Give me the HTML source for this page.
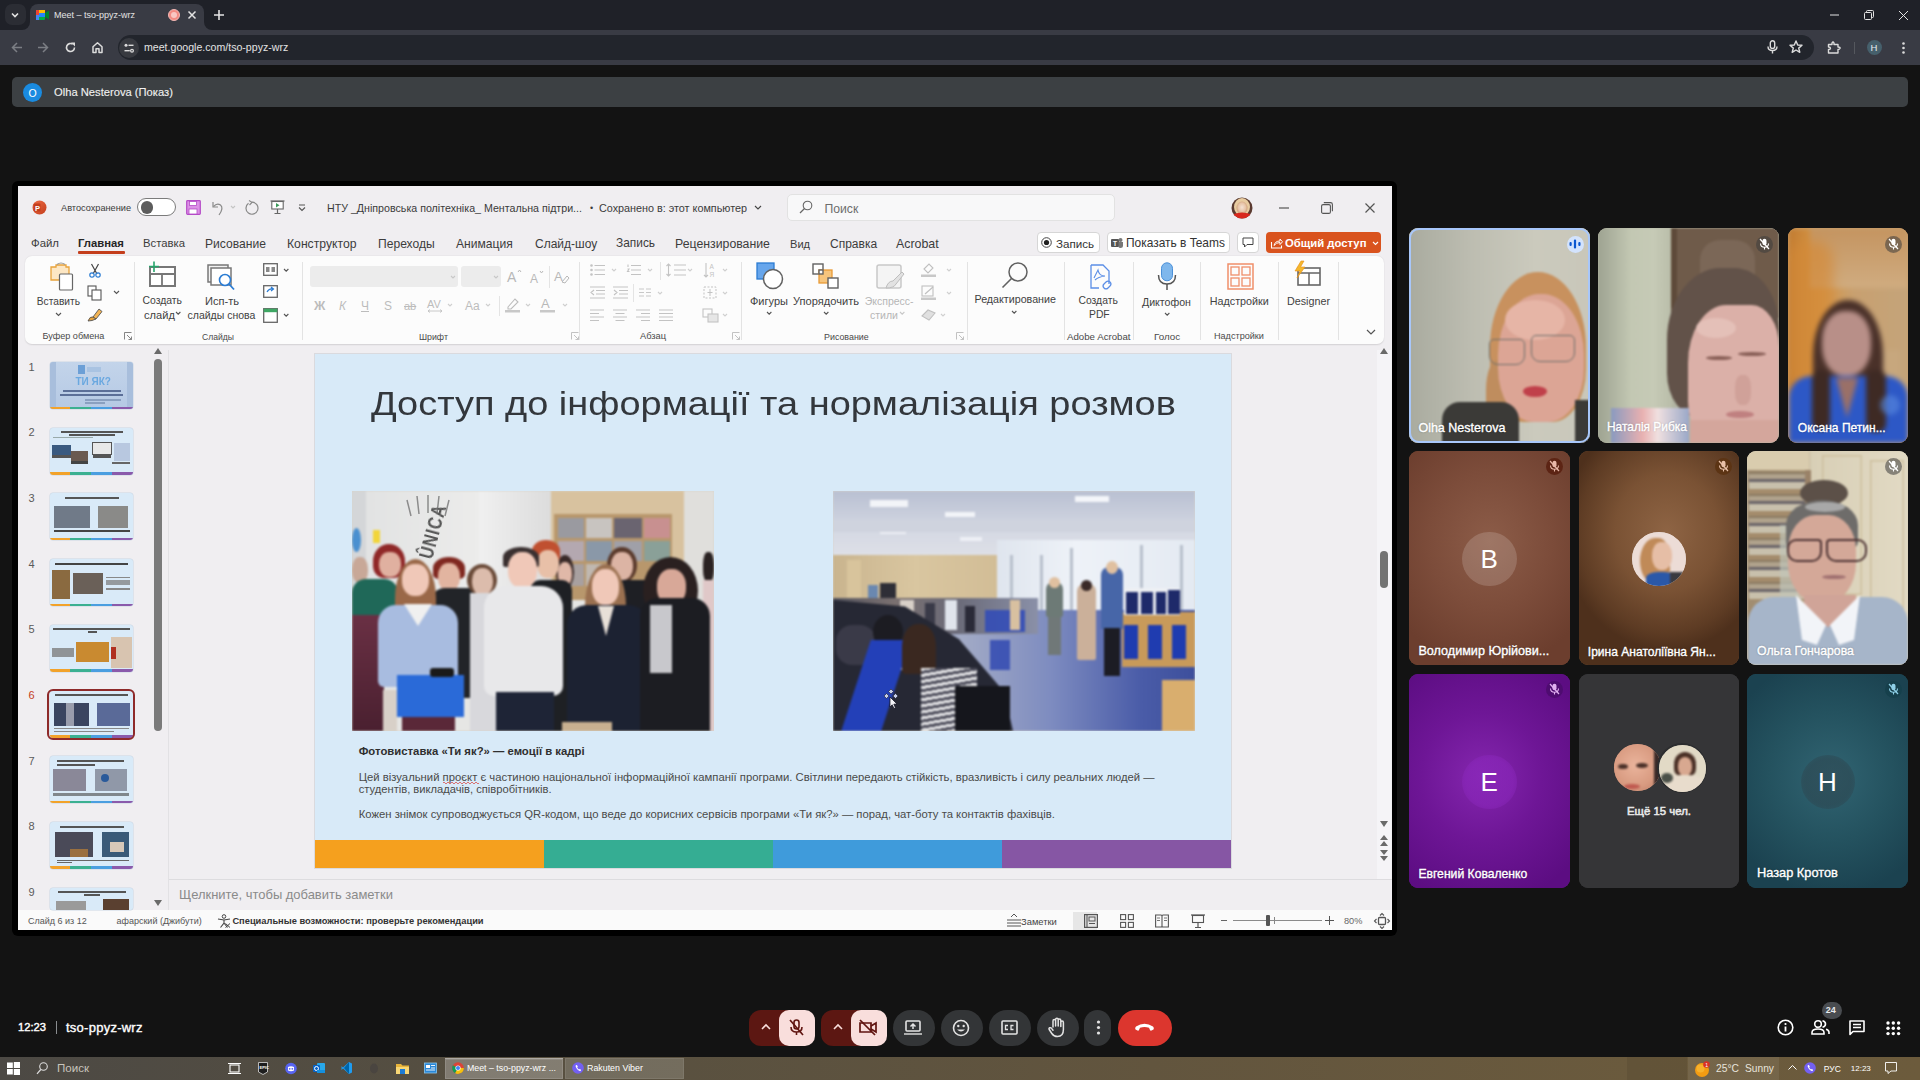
<!DOCTYPE html>
<html><head><meta charset="utf-8">
<style>
*{margin:0;padding:0;box-sizing:border-box}
html,body{width:1920px;height:1080px;overflow:hidden;background:#131313;font-family:"Liberation Sans",sans-serif;}
.a{position:absolute}
.t{position:absolute;white-space:nowrap;line-height:1}
svg{position:absolute;overflow:visible}
/* chrome */
#tabstrip{left:0;top:0;width:1920px;height:30px;background:#1f2128}
#toolbar{left:0;top:30px;width:1920px;height:35px;background:#393b44}
#omni{left:118px;top:35px;width:1696px;height:25px;border-radius:13px;background:#22252c}
#meetbg{left:0;top:65px;width:1920px;height:992px;background:#131313}
#presbar{left:12px;top:77px;width:1896px;height:30px;border-radius:5px;background:#3c4043}
#frame{left:12px;top:181px;width:1385px;height:755px;border-radius:6px;background:#000}
#win{left:18px;top:186px;width:1374px;height:744px;background:#f0eef1;overflow:hidden}
.tile{position:absolute;border-radius:9px;overflow:hidden}
#taskbar{left:0;top:1057px;width:1920px;height:23px;background:#5a4f40}
</style></head>
<body>
<div class="a" id="tabstrip"></div>
<div class="a" id="toolbar"></div>
<div class="a" id="omni"></div>
<div class="a" id="meetbg"></div>
<div class="a" id="presbar"></div>

<!-- CHROME -->
<div class="a" style="left:30px;top:4px;width:174px;height:26px;border-radius:8px 8px 0 0;background:#393b44"></div>
<div class="a" style="left:22px;top:22px;width:8px;height:8px;background:#393b44"></div>
<div class="a" style="left:22px;top:22px;width:8px;height:8px;border-radius:0 0 8px 0;background:#1f2128"></div>
<div class="a" style="left:204px;top:22px;width:8px;height:8px;background:#393b44"></div>
<div class="a" style="left:204px;top:22px;width:8px;height:8px;border-radius:0 0 0 8px;background:#1f2128"></div>
<div class="a" style="left:5px;top:4px;width:21px;height:21px;border-radius:7px;background:#2b2d34"></div>
<svg style="left:10px;top:10px" width="10" height="10"><path d="M2 3.5 L5 6.5 L8 3.5" stroke="#e3e3e3" stroke-width="1.6" fill="none"/></svg>
<svg style="left:36px;top:10px" width="13" height="10" viewBox="0 0 13 10"><rect x="0" y="0" width="9" height="10" rx="1" fill="#00ac47"/><rect x="0" y="0" width="5" height="5" fill="#ea4335"/><rect x="0" y="5" width="3" height="5" fill="#4285f4"/><rect x="3" y="0" width="6" height="3" fill="#fbbc04"/><rect x="3" y="3" width="6" height="4" fill="#2684fc"/><path d="M9 3 L13 0.5 V9.5 L9 7Z" fill="#00832d"/></svg>
<div class="t" style="left:54px;top:11px;font-size:9px;color:#e3e3e3">Meet – tso-ppyz-wrz</div>
<div class="a" style="left:168px;top:9px;width:12px;height:12px;border-radius:50%;border:1.6px solid #f2b8b5;background:#f28b82"></div>
<div class="a" style="left:171px;top:12px;width:6px;height:6px;border-radius:50%;background:#f8c7c3"></div>
<svg style="left:188px;top:11px" width="8" height="8"><path d="M0.5 0.5 L7.5 7.5 M7.5 0.5 L0.5 7.5" stroke="#e3e3e3" stroke-width="1.5"/></svg>
<svg style="left:214px;top:10px" width="10" height="10"><path d="M5 0 V10 M0 5 H10" stroke="#e3e3e3" stroke-width="1.6"/></svg>
<svg style="left:1830px;top:14px" width="9" height="2"><path d="M0 1 H9" stroke="#e3e3e3" stroke-width="1"/></svg>
<svg style="left:1864px;top:10px" width="10" height="10"><rect x="0.5" y="2.5" width="7" height="7" rx="1" fill="none" stroke="#e3e3e3"/><path d="M2.5 2.5 V1.5 Q2.5 0.5 3.5 0.5 H8.5 Q9.5 0.5 9.5 1.5 V6.5 Q9.5 7.5 8.5 7.5 H7.5" fill="none" stroke="#e3e3e3"/></svg>
<svg style="left:1899px;top:11px" width="9" height="9"><path d="M0 0 L9 9 M9 0 L0 9" stroke="#e3e3e3" stroke-width="1"/></svg>
<!-- toolbar icons -->
<svg style="left:11px;top:42px" width="12" height="11" viewBox="0 0 12 11"><path d="M11 5.5 H1.5 M6 1 L1.5 5.5 L6 10" stroke="#7b7e84" stroke-width="1.5" fill="none"/></svg>
<svg style="left:37px;top:42px" width="12" height="11" viewBox="0 0 12 11"><path d="M1 5.5 H10.5 M6 1 L10.5 5.5 L6 10" stroke="#7b7e84" stroke-width="1.5" fill="none"/></svg>
<svg style="left:65px;top:42px" width="11" height="11" viewBox="0 0 11 11"><path d="M9.5 5.5 A4 4 0 1 1 7.8 2.2" stroke="#dcdcdc" stroke-width="1.6" fill="none"/><path d="M6 0.5 H10 V4.5Z" fill="#dcdcdc"/></svg>
<svg style="left:92px;top:42px" width="11" height="11" viewBox="0 0 11 11"><path d="M1 10.5 V4.8 L5.5 0.8 L10 4.8 V10.5 H7 V6.8 H4 V10.5Z" stroke="#dcdcdc" stroke-width="1.5" fill="none" stroke-linejoin="round"/></svg>
<div class="a" style="left:119px;top:38px;width:20px;height:20px;border-radius:50%;background:#383a40"></div>
<svg style="left:124px;top:43px" width="10" height="10" viewBox="0 0 10 10"><circle cx="2" cy="2.3" r="1.5" fill="#dcdcdc"/><path d="M4.5 2.3 H9.5" stroke="#dcdcdc" stroke-width="1.4"/><circle cx="8" cy="7.7" r="1.4" fill="none" stroke="#dcdcdc" stroke-width="1.2"/><path d="M0.5 7.7 H5.8" stroke="#dcdcdc" stroke-width="1.4"/></svg>
<div class="t" style="left:144px;top:42px;font-size:10.6px;color:#e3e3e3">meet.google.com/tso-ppyz-wrz</div>
<svg style="left:1767px;top:40px" width="11" height="14" viewBox="0 0 11 14"><rect x="3.3" y="0.8" width="4.4" height="7.6" rx="2.2" fill="none" stroke="#dcdcdc" stroke-width="1.4"/><path d="M1 6.5 Q1 10.5 5.5 10.5 Q10 10.5 10 6.5 M5.5 10.5 V13.5" fill="none" stroke="#dcdcdc" stroke-width="1.4"/></svg>
<svg style="left:1789px;top:40px" width="14" height="13" viewBox="0 0 14 13"><path d="M7 1 L8.7 5 L13 5.3 L9.7 8.1 L10.8 12.3 L7 10 L3.2 12.3 L4.3 8.1 L1 5.3 L5.3 5Z" fill="none" stroke="#dcdcdc" stroke-width="1.4" stroke-linejoin="round"/></svg>
<svg style="left:1827px;top:40px" width="15" height="14" viewBox="0 0 15 14"><path d="M1.5 4.5 H5 V3 Q6 1 7 3 V4.5 H11 V7 Q13.5 7 13 8.5 Q12.5 9.5 11 9.5 V13 H1.5 V9.5 Q3.5 9.5 3.5 8.2 Q3.5 7 1.5 7Z" fill="none" stroke="#dcdcdc" stroke-width="1.4" stroke-linejoin="round"/></svg>
<div class="a" style="left:1854px;top:42px;width:1px;height:12px;background:#55585e"></div>
<div class="a" style="left:1867px;top:40px;width:15px;height:15px;border-radius:50%;background:#46606c"></div>
<div class="t" style="left:1870.5px;top:43px;font-size:9.5px;color:#e8eef0">H</div>
<svg style="left:1901px;top:42px" width="5" height="12"><circle cx="2.5" cy="1.5" r="1.3" fill="#dcdcdc"/><circle cx="2.5" cy="6" r="1.3" fill="#dcdcdc"/><circle cx="2.5" cy="10.5" r="1.3" fill="#dcdcdc"/></svg>
<!-- presenting bar -->
<div class="a" style="left:23px;top:83px;width:19px;height:19px;border-radius:50%;background:#1a8be0"></div>
<div class="t" style="left:28.5px;top:87.5px;font-size:10.5px;color:#fff">O</div>
<div class="t" style="left:54px;top:86.5px;font-size:11.2px;color:#f0f0f0;-webkit-text-stroke:0.12px #f0f0f0">Olha Nesterova (Показ)</div>
<div class="a" id="frame"></div>
<div class="a" id="win"></div>
<svg style="left:32px;top:200px" width="15" height="15" viewBox="0 0 15 15"><defs><linearGradient id="ppg" x1="0" y1="0" x2="1" y2="1"><stop offset="0" stop-color="#ed6c47"/><stop offset="1" stop-color="#c43e1c"/></linearGradient></defs><circle cx="7.5" cy="7.5" r="7" fill="url(#ppg)"/><rect x="1.5" y="3.5" width="7" height="8" rx="1" fill="#c43e1c"/><text x="3" y="10.5" font-size="7.5" font-family="Liberation Sans" font-weight="bold" fill="#fff">P</text></svg>
<div class="t" style="left:61.0px;top:203.9px;font-size:9.2px;color:#3b3b3b;font-weight:normal;">Автосохранение</div>
<div class="a" style="left:137px;top:198px;width:39px;height:18px;border:1px solid #7b7b7b;border-radius:9px;background:#fff"></div>
<div class="a" style="left:140.5px;top:201px;width:12.5px;height:12.5px;border-radius:50%;background:#5c5c5c"></div>
<svg style="left:186px;top:200px" width="15" height="15" viewBox="0 0 15 15"><rect x="0.7" y="0.7" width="13.6" height="13.6" rx="0.8" fill="#dc91e6" stroke="#b54bc7" stroke-width="1.2"/><rect x="3.5" y="1.5" width="7" height="4" fill="#fff" stroke="#b54bc7" stroke-width="0.8"/><rect x="3" y="9" width="8" height="5" fill="#fff" stroke="#b54bc7" stroke-width="0.8"/></svg>
<svg style="left:210px;top:200px" width="16" height="16" viewBox="0 0 16 16"><path d="M3 2 V7 H8" stroke="#8a8a8a" stroke-width="1.2" fill="none"/><path d="M3.5 6.5 Q7 2.5 10.5 5 Q14 8 9 15" stroke="#8a8a8a" stroke-width="1.2" fill="none"/></svg>
<svg style="left:230px;top:205.0px" width="6" height="4" viewBox="0 0 6 4"><path d="M1 1 L3 3 L5 1" stroke="#c4c4c4" stroke-width="1.1" fill="none"/></svg>
<svg style="left:244px;top:200px" width="16" height="16" viewBox="0 0 16 16"><path d="M8 2.2 A6 6 0 1 1 4.5 3.3" stroke="#8a8a8a" stroke-width="1.2" fill="none"/><path d="M5 0.5 L8 2.3 L5.5 5" stroke="#8a8a8a" stroke-width="1.2" fill="none"/></svg>
<svg style="left:270px;top:200px" width="15" height="15" viewBox="0 0 15 15"><path d="M0.5 1 H14.5" stroke="#666" stroke-width="1.2"/><rect x="1.8" y="1.5" width="11.4" height="7.5" fill="#fff" stroke="#666" stroke-width="1.1"/><path d="M6 3 L9.5 5.2 L6 7.4Z" fill="#3a9a5a"/><path d="M7.5 9 V13.5 M4.5 13.5 H10.5" stroke="#666" stroke-width="1.2"/></svg>
<svg style="left:298px;top:204px" width="8" height="8" viewBox="0 0 8 8"><path d="M1 1 H7 M1 3.5 L4 6.5 L7 3.5" stroke="#555" stroke-width="1.1" fill="none"/></svg>
<div class="t" style="left:327.0px;top:203.2px;font-size:10.66px;color:#3b3b3b;font-weight:normal;">НТУ _Дніпровська політехніка_ Ментальна підтри...</div>
<div class="t" style="left:590.0px;top:203.9px;font-size:9px;color:#3b3b3b;font-weight:normal;">•</div>
<div class="t" style="left:599.0px;top:203.1px;font-size:10.8px;color:#3b3b3b;font-weight:normal;">Сохранено в: этот компьютер</div>
<svg style="left:754px;top:204.5px" width="8" height="5" viewBox="0 0 8 5"><path d="M1 1 L4 4 L7 1" stroke="#444" stroke-width="1.1" fill="none"/></svg>
<div class="a" style="left:787px;top:194px;width:328px;height:27px;border:1px solid #e2e2e2;border-radius:5px;background:#f8f8f9"></div>
<svg style="left:799px;top:200px" width="14" height="14" viewBox="0 0 14 14"><circle cx="8.5" cy="5.5" r="4.3" stroke="#666" stroke-width="1.1" fill="none"/><path d="M5.5 8.5 L1 13" stroke="#666" stroke-width="1.2"/></svg>
<div class="t" style="left:824.5px;top:202.5px;font-size:12.2px;color:#6d6d6d;font-weight:normal;">Поиск</div>
<svg style="left:1231px;top:197px" width="22" height="22" viewBox="0 0 22 22"><defs><clipPath id="avc"><circle cx="11" cy="11" r="10.5"/></clipPath><radialGradient id="avg" cx="0.5" cy="0.45" r="0.55"><stop offset="0" stop-color="#f4e2d4"/><stop offset="0.6" stop-color="#e8c4a8"/><stop offset="1" stop-color="#c89870"/></radialGradient></defs><g clip-path="url(#avc)"><rect width="22" height="22" fill="#5a3a30"/><ellipse cx="11" cy="10" rx="8" ry="9" fill="#e8cba0"/><ellipse cx="11" cy="11" rx="5.5" ry="6.5" fill="url(#avg)"/><path d="M0 18 Q11 13 22 18 V22 H0Z" fill="#d8281e"/></g></svg>
<svg style="left:1279px;top:207px" width="10" height="2" viewBox="0 0 10 2"><path d="M0 1 H10" stroke="#555" stroke-width="1.2"/></svg>
<svg style="left:1321px;top:202px" width="12" height="12" viewBox="0 0 12 12"><rect x="0.6" y="2.6" width="8.8" height="8.8" rx="1.5" stroke="#555" stroke-width="1.1" fill="none"/><path d="M2.8 0.6 H9.5 Q11.4 0.6 11.4 2.5 V9.2" stroke="#555" stroke-width="1.1" fill="none"/></svg>
<svg style="left:1365px;top:203px" width="10" height="10" viewBox="0 0 10 10"><path d="M0.5 0.5 L9.5 9.5 M9.5 0.5 L0.5 9.5" stroke="#555" stroke-width="1.2"/></svg>
<div class="t" style="left:31.0px;top:238.4px;font-size:11.4px;color:#3c3c3c;font-weight:normal;">Файл</div>
<div class="t" style="left:78.0px;top:238.4px;font-size:11.3px;color:#262626;font-weight:bold;">Главная</div>
<div class="t" style="left:143.0px;top:238.4px;font-size:11.3px;color:#3c3c3c;font-weight:normal;">Вставка</div>
<div class="t" style="left:205.0px;top:238.1px;font-size:12.1px;color:#3c3c3c;font-weight:normal;">Рисование</div>
<div class="t" style="left:287.0px;top:238.0px;font-size:12.2px;color:#3c3c3c;font-weight:normal;">Конструктор</div>
<div class="t" style="left:378.0px;top:238.1px;font-size:12.1px;color:#3c3c3c;font-weight:normal;">Переходы</div>
<div class="t" style="left:456.0px;top:238.1px;font-size:12.1px;color:#3c3c3c;font-weight:normal;">Анимация</div>
<div class="t" style="left:535.0px;top:238.1px;font-size:12.0px;color:#3c3c3c;font-weight:normal;">Слайд-шоу</div>
<div class="t" style="left:616.0px;top:238.1px;font-size:11.9px;color:#3c3c3c;font-weight:normal;">Запись</div>
<div class="t" style="left:675.0px;top:238.0px;font-size:12.3px;color:#3c3c3c;font-weight:normal;">Рецензирование</div>
<div class="t" style="left:790.0px;top:238.5px;font-size:11.1px;color:#3c3c3c;font-weight:normal;">Вид</div>
<div class="t" style="left:830.0px;top:238.1px;font-size:12.0px;color:#3c3c3c;font-weight:normal;">Справка</div>
<div class="t" style="left:896.0px;top:237.9px;font-size:12.4px;color:#3c3c3c;font-weight:normal;">Acrobat</div>
<div class="a" style="left:78px;top:251px;width:47px;height:2.5px;background:#c43e1c;border-radius:1px"></div>
<div class="a" style="left:1037px;top:232px;width:63px;height:21px;border:1px solid #d6d6d6;border-radius:4px;background:#fff"></div>
<svg style="left:1041px;top:237px" width="11" height="11" viewBox="0 0 11 11"><circle cx="5.5" cy="5.5" r="4.8" stroke="#444" stroke-width="1" fill="none"/><circle cx="5.5" cy="5.5" r="2.6" fill="#222"/></svg>
<div class="t" style="left:1056.0px;top:237.8px;font-size:11.6px;color:#333;font-weight:normal;">Запись</div>
<div class="a" style="left:1107px;top:232px;width:123px;height:21px;border:1px solid #d6d6d6;border-radius:4px;background:#fff"></div>
<svg style="left:1111px;top:237px" width="12" height="11" viewBox="0 0 12 11"><rect x="0" y="2" width="8" height="8" rx="1" fill="#555"/><text x="2" y="8.7" font-size="6.5" font-family="Liberation Sans" font-weight="bold" fill="#fff">T</text><circle cx="9.5" cy="3" r="2" fill="#777"/><path d="M7.5 5 H12 V9 Q12 11 9.5 11 Q8 11 7.5 10Z" fill="#777"/></svg>
<div class="t" style="left:1126.0px;top:237.6px;font-size:11.95px;color:#333;font-weight:normal;">Показать в Teams</div>
<div class="a" style="left:1237px;top:232px;width:22px;height:21px;border:1px solid #d6d6d6;border-radius:4px;background:#fff"></div>
<svg style="left:1242px;top:237px" width="12" height="11" viewBox="0 0 12 11"><path d="M1 1 H11 V7.5 H5 L2.5 10 V7.5 H1Z" stroke="#444" stroke-width="1" fill="none"/></svg>
<div class="a" style="left:1266px;top:232px;width:115px;height:21px;border-radius:4px;background:#d9531e"></div>
<svg style="left:1270px;top:237px" width="13" height="12" viewBox="0 0 13 12"><path d="M1.5 5 V11 H11.5 V8.5" stroke="#fff" stroke-width="1.1" fill="none"/><path d="M4 8.5 Q5 4 10 4 V2 L12.5 4.8 L10 7.5 V5.5 Q6 5.5 4 8.5Z" stroke="#fff" stroke-width="1" fill="none"/></svg>
<div class="t" style="left:1285.0px;top:237.9px;font-size:11.3px;color:#fff;font-weight:bold;">Общий доступ</div>
<svg style="left:1371.5px;top:240.75px" width="7.0" height="4.5" viewBox="0 0 7.0 4.5"><path d="M1 1 L3.5 3.5 L6.0 1" stroke="#fff" stroke-width="1.1" fill="none"/></svg>
<div class="a" style="left:25px;top:256px;width:1359px;height:88px;background:#fcfcfc;border-radius:7px;box-shadow:0 0.5px 1.5px rgba(0,0,0,0.12)"></div>
<div class="a" style="left:134px;top:262px;width:1px;height:78px;background:#e3e3e3"></div>
<div class="a" style="left:302px;top:262px;width:1px;height:78px;background:#e3e3e3"></div>
<div class="a" style="left:579px;top:262px;width:1px;height:78px;background:#e3e3e3"></div>
<div class="a" style="left:741px;top:262px;width:1px;height:78px;background:#e3e3e3"></div>
<div class="a" style="left:967px;top:262px;width:1px;height:78px;background:#e3e3e3"></div>
<div class="a" style="left:1064px;top:262px;width:1px;height:78px;background:#e3e3e3"></div>
<div class="a" style="left:1133px;top:262px;width:1px;height:78px;background:#e3e3e3"></div>
<div class="a" style="left:1200px;top:262px;width:1px;height:78px;background:#e3e3e3"></div>
<div class="a" style="left:1278px;top:262px;width:1px;height:78px;background:#e3e3e3"></div>
<div class="a" style="left:1338px;top:262px;width:1px;height:78px;background:#e3e3e3"></div>
<div class="t" style="left:42.5px;top:332.4px;font-size:9.1px;color:#4a4a4a;font-weight:normal;">Буфер обмена</div>
<div class="t" style="left:202.0px;top:332.6px;font-size:8.6px;color:#4a4a4a;font-weight:normal;">Слайды</div>
<div class="t" style="left:419.0px;top:332.5px;font-size:8.8px;color:#4a4a4a;font-weight:normal;">Шрифт</div>
<div class="t" style="left:640.0px;top:332.3px;font-size:9.3px;color:#4a4a4a;font-weight:normal;">Абзац</div>
<div class="t" style="left:824.0px;top:332.5px;font-size:8.9px;color:#4a4a4a;font-weight:normal;">Рисование</div>
<div class="t" style="left:1067.0px;top:332.1px;font-size:9.7px;color:#4a4a4a;font-weight:normal;">Adobe Acrobat</div>
<div class="t" style="left:1154.0px;top:332.1px;font-size:9.8px;color:#4a4a4a;font-weight:normal;">Голос</div>
<div class="t" style="left:1214.0px;top:332.4px;font-size:9.1px;color:#4a4a4a;font-weight:normal;">Надстройки</div>
<svg style="left:124px;top:332px" width="8" height="8" viewBox="0 0 8 8"><path d="M0.5 7.5 V0.5 H7.5" stroke="#777" stroke-width="0.9" fill="none"/><path d="M3 3 L7.5 7.5 M4.5 7.5 H7.5 V4.5" stroke="#777" stroke-width="0.9" fill="none"/></svg>
<svg style="left:571px;top:332px" width="8" height="8" viewBox="0 0 8 8"><path d="M0.5 7.5 V0.5 H7.5" stroke="#bbb" stroke-width="0.9" fill="none"/><path d="M3 3 L7.5 7.5 M4.5 7.5 H7.5 V4.5" stroke="#bbb" stroke-width="0.9" fill="none"/></svg>
<svg style="left:732px;top:332px" width="8" height="8" viewBox="0 0 8 8"><path d="M0.5 7.5 V0.5 H7.5" stroke="#bbb" stroke-width="0.9" fill="none"/><path d="M3 3 L7.5 7.5 M4.5 7.5 H7.5 V4.5" stroke="#bbb" stroke-width="0.9" fill="none"/></svg>
<svg style="left:956px;top:332px" width="8" height="8" viewBox="0 0 8 8"><path d="M0.5 7.5 V0.5 H7.5" stroke="#bbb" stroke-width="0.9" fill="none"/><path d="M3 3 L7.5 7.5 M4.5 7.5 H7.5 V4.5" stroke="#bbb" stroke-width="0.9" fill="none"/></svg>
<svg style="left:48px;top:262px" width="27" height="30" viewBox="0 0 27 30"><path d="M3 5 H8 V3 H18 V5 H21 V18 H3Z" fill="#fde7c4" stroke="#e8a33a" stroke-width="1.3"/><path d="M9 2.5 Q13 -0.5 17 2.5" stroke="#999" stroke-width="1.2" fill="none"/><rect x="11.5" y="12" width="13" height="16" rx="1" fill="#fff" stroke="#666" stroke-width="1.2"/></svg>
<div class="t" style="left:36.8px;top:296.9px;font-size:10.2px;color:#424242;font-weight:normal;">Вставить</div>
<svg style="left:54.5px;top:312.25px" width="7.0" height="4.5" viewBox="0 0 7.0 4.5"><path d="M1 1 L3.5 3.5 L6.0 1" stroke="#555" stroke-width="1.1" fill="none"/></svg>
<svg style="left:89px;top:263px" width="12" height="15" viewBox="0 0 12 15"><path d="M2.5 1 L8 11 M9.5 1 L4 11" stroke="#444" stroke-width="1.2"/><circle cx="3" cy="12" r="2.2" stroke="#2b7cd3" stroke-width="1.2" fill="none"/><circle cx="9" cy="12" r="2.2" stroke="#2b7cd3" stroke-width="1.2" fill="none"/></svg>
<svg style="left:87px;top:285px" width="16" height="16" viewBox="0 0 16 16"><rect x="1" y="1" width="8" height="10" fill="#fff" stroke="#555" stroke-width="1.1"/><rect x="5" y="5" width="9" height="10" fill="#fff" stroke="#555" stroke-width="1.1"/></svg>
<svg style="left:112.5px;top:290.25px" width="7.0" height="4.5" viewBox="0 0 7.0 4.5"><path d="M1 1 L3.5 3.5 L6.0 1" stroke="#555" stroke-width="1.1" fill="none"/></svg>
<svg style="left:87px;top:307px" width="16" height="15" viewBox="0 0 16 15"><path d="M6 10 L12 2 L15 4.5 L9 12Z" fill="#f3b454" stroke="#555" stroke-width="0.9"/><path d="M1 14 Q3 9 6 10 L9 12 Q5 14 1 14Z" fill="#e8a33a" stroke="#555" stroke-width="0.9"/></svg>
<svg style="left:147px;top:261px" width="30" height="27" viewBox="0 0 30 27"><rect x="3" y="6" width="25" height="19" fill="#fff" stroke="#777" stroke-width="2"/><path d="M3 13 H28 M15 13 V25" stroke="#777" stroke-width="1.8"/><path d="M7 0.5 V11 M2 5.5 H12" stroke="#26a46b" stroke-width="1.6"/></svg>
<div class="t" style="left:142.5px;top:295.8px;font-size:10.4px;color:#424242;font-weight:normal;">Создать</div>
<div class="t" style="left:144.0px;top:309.5px;font-size:11.1px;color:#424242;font-weight:normal;">слайд</div>
<svg style="left:174.8px;top:311.4px" width="6.4" height="4.2" viewBox="0 0 6.4 4.2"><path d="M1 1 L3.2 3.2 L5.4 1" stroke="#555" stroke-width="1.1" fill="none"/></svg>
<svg style="left:207px;top:264px" width="31" height="27" viewBox="0 0 31 27"><rect x="1" y="1" width="20" height="17" fill="#f2f2f2" stroke="#777" stroke-width="1.5"/><rect x="4" y="4" width="20" height="17" fill="#fff" stroke="#777" stroke-width="1.5"/><circle cx="18" cy="16" r="5.5" fill="#fff" stroke="#2b7cd3" stroke-width="1.6"/><path d="M22 20 L27 25.5" stroke="#2b7cd3" stroke-width="1.8"/></svg>
<div class="t" style="left:205.0px;top:295.5px;font-size:11.1px;color:#424242;font-weight:normal;">Исп-ть</div>
<div class="t" style="left:187.5px;top:309.8px;font-size:10.5px;color:#424242;font-weight:normal;">слайды снова</div>
<svg style="left:263px;top:263px" width="15" height="13" viewBox="0 0 15 13"><rect x="0.7" y="0.7" width="13.6" height="11.6" fill="#fff" stroke="#666" stroke-width="1.3"/><rect x="3" y="4" width="3.5" height="5" fill="#888"/><rect x="8.5" y="4" width="3.5" height="5" fill="#888"/></svg>
<svg style="left:282.8px;top:267.9px" width="6.4" height="4.2" viewBox="0 0 6.4 4.2"><path d="M1 1 L3.2 3.2 L5.4 1" stroke="#555" stroke-width="1.1" fill="none"/></svg>
<svg style="left:263px;top:285px" width="15" height="13" viewBox="0 0 15 13"><rect x="0.7" y="0.7" width="13.6" height="11.6" fill="#fff" stroke="#666" stroke-width="1.3"/><path d="M4 7 Q6 3 10 4 M8 2 L10.5 4 L8 6" stroke="#2b7cd3" stroke-width="1.2" fill="none"/></svg>
<svg style="left:263px;top:308px" width="15" height="15" viewBox="0 0 15 15"><rect x="0.7" y="0.7" width="13.6" height="13.6" fill="#fff" stroke="#666" stroke-width="1.3"/><rect x="0.7" y="0.7" width="13.6" height="3.5" fill="#3fa764"/></svg>
<svg style="left:282.8px;top:312.9px" width="6.4" height="4.2" viewBox="0 0 6.4 4.2"><path d="M1 1 L3.2 3.2 L5.4 1" stroke="#555" stroke-width="1.1" fill="none"/></svg>
<div class="a" style="left:310px;top:266px;width:148px;height:21px;background:#ececec;border-radius:3px"></div>
<svg style="left:450px;top:275.0px" width="6" height="4" viewBox="0 0 6 4"><path d="M1 1 L3 3 L5 1" stroke="#c8c8c8" stroke-width="1.1" fill="none"/></svg>
<div class="a" style="left:461px;top:266px;width:40px;height:21px;background:#ececec;border-radius:3px"></div>
<svg style="left:493px;top:275.0px" width="6" height="4" viewBox="0 0 6 4"><path d="M1 1 L3 3 L5 1" stroke="#c8c8c8" stroke-width="1.1" fill="none"/></svg>
<svg style="left:507px;top:269px" width="15" height="14" viewBox="0 0 15 14"><text x="0" y="13" font-size="14" font-family="Liberation Sans" fill="#b8b8b8">A</text><path d="M11 3 L12.5 1 L14 3" stroke="#b8b8b8" fill="none"/></svg>
<svg style="left:530px;top:270px" width="15" height="13" viewBox="0 0 15 13"><text x="0" y="12.5" font-size="12" font-family="Liberation Sans" fill="#b8b8b8">A</text><path d="M10 1 L11.5 3 L13 1" stroke="#b8b8b8" fill="none"/></svg>
<div class="a" style="left:549px;top:266px;width:1px;height:22px;background:#e4e4e4"></div>
<svg style="left:554px;top:269px" width="15" height="15" viewBox="0 0 15 15"><text x="0" y="12" font-size="13" font-family="Liberation Sans" fill="#b8b8b8">A</text><path d="M8 13 L13 7 L15 9 L11 14Z" fill="none" stroke="#b8b8b8"/></svg>
<div class="t" style="left:314.0px;top:299.9px;font-size:12.5px;color:#bcbcbc;font-weight:bold;">Ж</div>
<div class="t" style="left:339.0px;top:300.1px;font-size:12px;color:#bcbcbc;font-weight:normal;font-style:italic">К</div>
<div class="t" style="left:361.0px;top:300.1px;font-size:12px;color:#bcbcbc;font-weight:normal;text-decoration:underline">Ч</div>
<div class="t" style="left:384.0px;top:300.1px;font-size:12px;color:#bcbcbc;font-weight:normal;">S</div>
<div class="t" style="left:404.0px;top:300.6px;font-size:11px;color:#bcbcbc;font-weight:normal;text-decoration:line-through">ab</div>
<div class="t" style="left:427.0px;top:299.1px;font-size:11px;color:#bcbcbc;font-weight:normal;">AV</div>
<svg style="left:427px;top:309px" width="16" height="4" viewBox="0 0 16 4"><path d="M1 2 H15 M3 0.5 L1 2 L3 3.5 M13 0.5 L15 2 L13 3.5" stroke="#bcbcbc" stroke-width="0.8" fill="none"/></svg>
<svg style="left:447px;top:303.0px" width="6" height="4" viewBox="0 0 6 4"><path d="M1 1 L3 3 L5 1" stroke="#cfcfcf" stroke-width="1.1" fill="none"/></svg>
<div class="t" style="left:465.0px;top:300.1px;font-size:12px;color:#bcbcbc;font-weight:normal;">Aa</div>
<svg style="left:485px;top:303.0px" width="6" height="4" viewBox="0 0 6 4"><path d="M1 1 L3 3 L5 1" stroke="#cfcfcf" stroke-width="1.1" fill="none"/></svg>
<div class="a" style="left:499px;top:296px;width:1px;height:20px;background:#e4e4e4"></div>
<svg style="left:505px;top:297px" width="15" height="16" viewBox="0 0 15 16"><path d="M3 10 L10 2 L13 5 L6 12 H3Z" fill="none" stroke="#bcbcbc" stroke-width="1.1"/><rect x="0" y="13" width="15" height="2.5" fill="#c8c8c8"/></svg>
<svg style="left:525px;top:303.0px" width="6" height="4" viewBox="0 0 6 4"><path d="M1 1 L3 3 L5 1" stroke="#cfcfcf" stroke-width="1.1" fill="none"/></svg>
<svg style="left:540px;top:296px" width="16" height="17" viewBox="0 0 16 17"><text x="1" y="12" font-size="13" font-family="Liberation Sans" fill="#b8b8b8">A</text><rect x="0" y="14" width="15" height="2.5" fill="#c8c8c8"/></svg>
<svg style="left:562px;top:303.0px" width="6" height="4" viewBox="0 0 6 4"><path d="M1 1 L3 3 L5 1" stroke="#cfcfcf" stroke-width="1.1" fill="none"/></svg>
<svg style="left:590px;top:264px" width="15" height="12" viewBox="0 0 15 12"><circle cx="1.5" cy="1.5" r="1.3" fill="#c3c3c3"/><circle cx="1.5" cy="6" r="1.3" fill="#c3c3c3"/><circle cx="1.5" cy="10.5" r="1.3" fill="#c3c3c3"/><path d="M4.5 1.5 H15 M4.5 6 H15 M4.5 10.5 H15" stroke="#c3c3c3" stroke-width="1.2"/></svg>
<svg style="left:611px;top:268.0px" width="6" height="4" viewBox="0 0 6 4"><path d="M1 1 L3 3 L5 1" stroke="#d0d0d0" stroke-width="1.1" fill="none"/></svg>
<svg style="left:627px;top:264px" width="14" height="12" viewBox="0 0 14 12"><path d="M1 0.5 V3 M0.5 5 H2 L0.5 7.5 H2.5 M4 1.5 H14 M4 6 H14 M4 10.5 H14" stroke="#c3c3c3" stroke-width="1.1" fill="none"/></svg>
<svg style="left:647px;top:268.0px" width="6" height="4" viewBox="0 0 6 4"><path d="M1 1 L3 3 L5 1" stroke="#d0d0d0" stroke-width="1.1" fill="none"/></svg>
<div class="a" style="left:660px;top:262px;width:1px;height:18px;background:#e4e4e4"></div>
<svg style="left:666px;top:263px" width="20" height="14" viewBox="0 0 20 14"><path d="M2.5 1 V13 M0.5 3 L2.5 1 L4.5 3 M0.5 11 L2.5 13 L4.5 11 M8 2 H20 M8 7 H20 M8 12 H20" stroke="#c3c3c3" stroke-width="1.1" fill="none"/></svg>
<svg style="left:687px;top:268.0px" width="6" height="4" viewBox="0 0 6 4"><path d="M1 1 L3 3 L5 1" stroke="#d0d0d0" stroke-width="1.1" fill="none"/></svg>
<svg style="left:703px;top:262px" width="14" height="16" viewBox="0 0 14 16"><path d="M3 1 V15 M1 13 L3 15 L5 13" stroke="#c3c3c3" stroke-width="1.1" fill="none"/><text x="6.5" y="7" font-size="6.5" font-family="Liberation Sans" fill="#c3c3c3">A</text><text x="6.5" y="15" font-size="6.5" font-family="Liberation Sans" fill="#c3c3c3">Я</text></svg>
<svg style="left:722px;top:268.0px" width="6" height="4" viewBox="0 0 6 4"><path d="M1 1 L3 3 L5 1" stroke="#d0d0d0" stroke-width="1.1" fill="none"/></svg>
<svg style="left:590px;top:286px" width="15" height="13" viewBox="0 0 15 13"><path d="M0 1 H15 M6 4.5 H15 M6 8 H15 M0 12 H15 M4 4 L1 6.5 L4 9" stroke="#c3c3c3" stroke-width="1.1" fill="none"/></svg>
<svg style="left:613px;top:286px" width="15" height="13" viewBox="0 0 15 13"><path d="M0 1 H15 M6 4.5 H15 M6 8 H15 M0 12 H15 M1 4 L4 6.5 L1 9" stroke="#c3c3c3" stroke-width="1.1" fill="none"/></svg>
<div class="a" style="left:633px;top:284px;width:1px;height:18px;background:#e4e4e4"></div>
<svg style="left:639px;top:288px" width="12" height="9" viewBox="0 0 12 9"><path d="M0 1 H5 M0 4.5 H5 M0 8 H5 M7 1 H12 M7 4.5 H12 M7 8 H12" stroke="#c8c8c8" stroke-width="1.2"/></svg>
<svg style="left:657px;top:291.0px" width="6" height="4" viewBox="0 0 6 4"><path d="M1 1 L3 3 L5 1" stroke="#d0d0d0" stroke-width="1.1" fill="none"/></svg>
<svg style="left:702px;top:285px" width="16" height="15" viewBox="0 0 16 15"><rect x="2" y="2" width="12" height="11" fill="none" stroke="#c3c3c3" stroke-dasharray="2 1.5"/><path d="M8 4 V11 M5.5 7.5 H10.5" stroke="#c3c3c3"/></svg>
<svg style="left:722px;top:291.0px" width="6" height="4" viewBox="0 0 6 4"><path d="M1 1 L3 3 L5 1" stroke="#d0d0d0" stroke-width="1.1" fill="none"/></svg>
<svg style="left:590px;top:309px" width="14" height="13" viewBox="0 0 14 13"><path d="M0 1 H14 M0 4.5 H9 M0 8 H14 M0 11.5 H9" stroke="#c3c3c3" stroke-width="1.2"/></svg>
<svg style="left:613px;top:309px" width="14" height="13" viewBox="0 0 14 13"><path d="M0 1 H14 M2.5 4.5 H11.5 M0 8 H14 M2.5 11.5 H11.5" stroke="#c3c3c3" stroke-width="1.2"/></svg>
<svg style="left:636px;top:309px" width="14" height="13" viewBox="0 0 14 13"><path d="M0 1 H14 M5 4.5 H14 M0 8 H14 M5 11.5 H14" stroke="#c3c3c3" stroke-width="1.2"/></svg>
<svg style="left:659px;top:309px" width="14" height="13" viewBox="0 0 14 13"><path d="M0 1 H14 M0 4.5 H14 M0 8 H14 M0 11.5 H14" stroke="#c3c3c3" stroke-width="1.2"/></svg>
<svg style="left:702px;top:308px" width="17" height="15" viewBox="0 0 17 15"><rect x="1" y="1" width="9" height="8" fill="none" stroke="#c3c3c3" stroke-width="1.1"/><rect x="6" y="6" width="10" height="8" fill="#e6e6e6" stroke="#c3c3c3" stroke-width="1.1"/></svg>
<svg style="left:722px;top:313.0px" width="6" height="4" viewBox="0 0 6 4"><path d="M1 1 L3 3 L5 1" stroke="#d0d0d0" stroke-width="1.1" fill="none"/></svg>
<svg style="left:756px;top:262px" width="28" height="28" viewBox="0 0 28 28"><rect x="1" y="1" width="17" height="16" fill="#67a6ec" stroke="#2b7cd3" stroke-width="1.3"/><circle cx="17" cy="17" r="9.5" fill="#fff" stroke="#616161" stroke-width="1.5"/></svg>
<div class="t" style="left:750.0px;top:295.6px;font-size:11.0px;color:#424242;font-weight:normal;">Фигуры</div>
<svg style="left:765.8px;top:310.9px" width="6.4" height="4.2" viewBox="0 0 6.4 4.2"><path d="M1 1 L3.2 3.2 L5.4 1" stroke="#555" stroke-width="1.1" fill="none"/></svg>
<svg style="left:812px;top:263px" width="28" height="27" viewBox="0 0 28 27"><rect x="1" y="1" width="10" height="10" fill="#fff" stroke="#616161" stroke-width="1.4"/><rect x="7" y="7" width="13" height="13" fill="#f6c57d" stroke="#e89a36" stroke-width="1.3"/><rect x="16" y="15" width="10" height="10" fill="#fff" stroke="#616161" stroke-width="1.4"/><rect x="7" y="7" width="4" height="4" fill="#fff" stroke="#616161" stroke-width="1.4"/></svg>
<div class="t" style="left:793.0px;top:295.5px;font-size:11.1px;color:#424242;font-weight:normal;">Упорядочить</div>
<svg style="left:822.8px;top:310.9px" width="6.4" height="4.2" viewBox="0 0 6.4 4.2"><path d="M1 1 L3.2 3.2 L5.4 1" stroke="#555" stroke-width="1.1" fill="none"/></svg>
<svg style="left:876px;top:264px" width="28" height="27" viewBox="0 0 28 27"><rect x="1" y="1" width="24" height="23" rx="2" fill="#f4f4f4" stroke="#c8c8c8" stroke-width="1.5"/><path d="M10 24 Q12 17 17 17 L26 8 L28 10 L20 20 Q18 24 10 24Z" fill="#e2e2e2" stroke="#bdbdbd" stroke-width="1"/></svg>
<div class="t" style="left:864.7px;top:295.8px;font-size:10.5px;color:#b6b6b6;font-weight:normal;">Экспресс-</div>
<div class="t" style="left:870.0px;top:309.8px;font-size:10.5px;color:#b6b6b6;font-weight:normal;">стили</div>
<svg style="left:898.8px;top:311.4px" width="6.4" height="4.2" viewBox="0 0 6.4 4.2"><path d="M1 1 L3.2 3.2 L5.4 1" stroke="#c8c8c8" stroke-width="1.1" fill="none"/></svg>
<svg style="left:921px;top:262px" width="15" height="15" viewBox="0 0 15 15"><path d="M3 7 L8 2 L12 6 L7 11Z" fill="none" stroke="#c0c0c0" stroke-width="1.1"/><rect x="0" y="12.5" width="15" height="2.5" fill="#c8c8c8"/></svg>
<svg style="left:946px;top:268.0px" width="6" height="4" viewBox="0 0 6 4"><path d="M1 1 L3 3 L5 1" stroke="#d0d0d0" stroke-width="1.1" fill="none"/></svg>
<svg style="left:921px;top:285px" width="15" height="15" viewBox="0 0 15 15"><rect x="1" y="1" width="11" height="10" fill="none" stroke="#c0c0c0" stroke-width="1.1"/><path d="M4 9 L12 2" stroke="#c0c0c0" stroke-width="1.2"/><rect x="0" y="12.5" width="15" height="2.5" fill="#c8c8c8"/></svg>
<svg style="left:946px;top:291.0px" width="6" height="4" viewBox="0 0 6 4"><path d="M1 1 L3 3 L5 1" stroke="#d0d0d0" stroke-width="1.1" fill="none"/></svg>
<svg style="left:921px;top:309px" width="15" height="12" viewBox="0 0 15 12"><path d="M1 7 L7 1 L14 4 L8 11 Z" fill="#e0e0e0" stroke="#c0c0c0" stroke-width="1.1"/></svg>
<svg style="left:940px;top:313.0px" width="6" height="4" viewBox="0 0 6 4"><path d="M1 1 L3 3 L5 1" stroke="#d0d0d0" stroke-width="1.1" fill="none"/></svg>
<svg style="left:1001px;top:262px" width="28" height="27" viewBox="0 0 28 27"><circle cx="17" cy="10" r="9" fill="none" stroke="#616161" stroke-width="1.5"/><path d="M10.5 16.5 L1.5 25.5" stroke="#616161" stroke-width="1.6"/></svg>
<div class="t" style="left:974.5px;top:294.2px;font-size:10.7px;color:#424242;font-weight:normal;">Редактирование</div>
<svg style="left:1011.3px;top:309.9px" width="6.4" height="4.2" viewBox="0 0 6.4 4.2"><path d="M1 1 L3.2 3.2 L5.4 1" stroke="#555" stroke-width="1.1" fill="none"/></svg>
<svg style="left:1090px;top:264px" width="24" height="28" viewBox="0 0 24 28"><path d="M1 1 H13 L19 7 V20" fill="none" stroke="#5b8ee6" stroke-width="1.3"/><path d="M1 1 V24 H9" fill="none" stroke="#5b8ee6" stroke-width="1.3"/><path d="M4 14 Q6 10 8 6 Q9 12 15 12 Q8 13 5 16" fill="none" stroke="#5b8ee6" stroke-width="1.1"/><path d="M13 21 L16 18 M14 24 Q12 22 14 20 L16 18 Q18 16 20 18 Q22 20 20 22 L18 24 Q16 26 14 24Z" fill="none" stroke="#5b8ee6" stroke-width="1.2"/></svg>
<div class="t" style="left:1078.5px;top:295.8px;font-size:10.35px;color:#424242;font-weight:normal;">Создать</div>
<div class="t" style="left:1089.0px;top:309.8px;font-size:10.35px;color:#424242;font-weight:normal;">PDF</div>
<svg style="left:1157px;top:262px" width="20" height="29" viewBox="0 0 20 29"><rect x="4.5" y="0.8" width="11" height="18" rx="5.5" fill="#7fb7ec" stroke="#4a90d9" stroke-width="1"/><path d="M1.5 13 Q1.5 22 10 22 Q18.5 22 18.5 13" fill="none" stroke="#555" stroke-width="1.5"/><path d="M10 22 V28" stroke="#555" stroke-width="1.5"/></svg>
<div class="t" style="left:1142.0px;top:296.7px;font-size:10.6px;color:#424242;font-weight:normal;">Диктофон</div>
<svg style="left:1163.8px;top:312.4px" width="6.4" height="4.2" viewBox="0 0 6.4 4.2"><path d="M1 1 L3.2 3.2 L5.4 1" stroke="#555" stroke-width="1.1" fill="none"/></svg>
<svg style="left:1227px;top:263px" width="27" height="27" viewBox="0 0 27 27"><rect x="1" y="1" width="25" height="25" fill="none" stroke="#ef8f6a" stroke-width="1.5"/><rect x="4" y="4" width="8" height="8" fill="none" stroke="#ef8f6a" stroke-width="1.3"/><rect x="15" y="4" width="8" height="8" fill="none" stroke="#ef8f6a" stroke-width="1.3"/><rect x="4" y="15" width="8" height="8" fill="none" stroke="#ef8f6a" stroke-width="1.3"/><rect x="15" y="15" width="8" height="8" fill="none" stroke="#ef8f6a" stroke-width="1.3"/></svg>
<div class="t" style="left:1209.8px;top:295.7px;font-size:10.75px;color:#424242;font-weight:normal;">Надстройки</div>
<svg style="left:1293px;top:261px" width="29" height="26" viewBox="0 0 29 26"><rect x="5" y="7" width="22" height="17" fill="#fff" stroke="#666" stroke-width="1.6"/><path d="M5 12 H27 M16 12 V24" stroke="#666" stroke-width="1.5"/><path d="M8 0 L2 10 H7 L4 17 L12 6 H7.5 L11 0Z" fill="#f5b72c" stroke="#e58e1a" stroke-width="0.6"/></svg>
<div class="t" style="left:1287.0px;top:295.7px;font-size:10.75px;color:#424242;font-weight:normal;">Designer</div>
<svg style="left:1366px;top:329px" width="10" height="6" viewBox="0 0 10 6"><path d="M1 1 L5 5 L9 1" stroke="#555" stroke-width="1.2" fill="none"/></svg>
<div class="a" style="left:168px;top:350px;width:1px;height:560px;background:#e2e1e4"></div>
<div class="a" style="left:169px;top:879px;width:1223px;height:1px;background:#dddcdf"></div>
<div class="a" style="left:1377px;top:350px;width:14px;height:529px;background:#f5f4f7"></div>
<svg style="left:1380px;top:348px" width="8" height="6" viewBox="0 0 8 6"><path d="M0 6 L4 0 L8 6Z" fill="#6a6a6a"/></svg>
<div class="a" style="left:1380px;top:551px;width:8px;height:37px;background:#737373;border-radius:4px"></div>
<svg style="left:1380px;top:821px" width="8" height="6" viewBox="0 0 8 6"><path d="M0 0 L4 6 L8 0Z" fill="#6a6a6a"/></svg>
<svg style="left:1380px;top:835px" width="8" height="11" viewBox="0 0 8 11"><path d="M0 5 L4 0 L8 5Z M0 11 L4 6 L8 11Z" fill="#6a6a6a"/></svg>
<svg style="left:1380px;top:850px" width="8" height="11" viewBox="0 0 8 11"><path d="M0 0 L4 5 L8 0Z M0 6 L4 11 L8 6Z" fill="#6a6a6a"/></svg>
<svg style="left:154px;top:348px" width="8" height="6" viewBox="0 0 8 6"><path d="M0 6 L4 0 L8 6Z" fill="#6a6a6a"/></svg>
<div class="a" style="left:154px;top:359px;width:8px;height:372px;background:#7a7a7a;border-radius:4px"></div>
<svg style="left:154px;top:900px" width="8" height="6" viewBox="0 0 8 6"><path d="M0 0 L4 6 L8 0Z" fill="#6a6a6a"/></svg>
<div class="t" style="left:179.0px;top:889.2px;font-size:12.96px;color:#8a8a8a;font-weight:normal;">Щелкните, чтобы добавить заметки</div>
<div class="a" style="left:18px;top:910px;width:1374px;height:20px;background:#fafafa"></div>
<div class="t" style="left:28.0px;top:917.0px;font-size:9.0px;color:#555;font-weight:normal;">Слайд 6 из 12</div>
<div class="t" style="left:116.5px;top:917.0px;font-size:9.0px;color:#555;font-weight:normal;">афарский (Джибути)</div>
<svg style="left:217px;top:914px" width="14" height="14" viewBox="0 0 14 14"><circle cx="7" cy="2.5" r="1.8" fill="none" stroke="#444" stroke-width="1"/><path d="M1 5 L7 6 L13 5 M7 6 V9 L3.5 13.5 M7 9 L10.5 13.5" fill="none" stroke="#444" stroke-width="1.1"/><path d="M8.5 9.5 L13 13.5 M13 9.5 L8.5 13.5" stroke="#444" stroke-width="1"/></svg>
<div class="t" style="left:232.4px;top:916.8px;font-size:9.3px;color:#333;font-weight:bold;">Специальные возможности: проверьте рекомендации</div>
<svg style="left:1007px;top:913px" width="14" height="14" viewBox="0 0 14 14"><path d="M4 4 L7 1 L10 4" stroke="#555" stroke-width="1" fill="none"/><path d="M0 7 H14 M0 10 H14 M0 13 H14" stroke="#555" stroke-width="1.2"/></svg>
<div class="t" style="left:1021.0px;top:916.8px;font-size:9.4px;color:#444;font-weight:normal;">Заметки</div>
<div class="a" style="left:1073px;top:912px;width:24px;height:18px;background:#e6e6e6"></div>
<svg style="left:1084px;top:914px" width="14" height="14" viewBox="0 0 14 14"><rect x="0.6" y="0.6" width="12.8" height="12.8" fill="none" stroke="#555" stroke-width="1.2"/><path d="M3 0.6 V13.4" stroke="#555" stroke-width="1.1"/><rect x="5" y="3" width="6" height="4" fill="none" stroke="#555" stroke-width="1"/><path d="M5 9.5 H11" stroke="#555"/></svg>
<svg style="left:1120px;top:914px" width="14" height="14" viewBox="0 0 14 14"><rect x="0.6" y="0.6" width="5" height="5" fill="none" stroke="#555" stroke-width="1.1"/><rect x="8.4" y="0.6" width="5" height="5" fill="none" stroke="#555" stroke-width="1.1"/><rect x="0.6" y="8.4" width="5" height="5" fill="none" stroke="#555" stroke-width="1.1"/><rect x="8.4" y="8.4" width="5" height="5" fill="none" stroke="#555" stroke-width="1.1"/></svg>
<svg style="left:1155px;top:914px" width="14" height="14" viewBox="0 0 14 14"><path d="M0.6 1 H6 Q7 1 7 2 Q7 1 8 1 H13.4 V13 H8 Q7 13 7 13.5 Q7 13 6 13 H0.6Z M7 2 V13" fill="none" stroke="#555" stroke-width="1.1"/><path d="M2 4 H5 M2 6.5 H5 M9 4 H12 M9 6.5 H12" stroke="#555" stroke-width="0.8"/></svg>
<svg style="left:1191px;top:914px" width="14" height="14" viewBox="0 0 14 14"><path d="M0 1 H14" stroke="#555" stroke-width="1.2"/><rect x="1.5" y="1.5" width="11" height="7" fill="none" stroke="#555" stroke-width="1.1"/><path d="M7 8.5 V13 M4 13.5 H10" stroke="#555" stroke-width="1.2"/></svg>
<div class="a" style="left:1221px;top:920px;width:6px;height:1px;background:#666"></div>
<div class="a" style="left:1233px;top:920px;width:89px;height:1px;background:#8a8a8a"></div>
<div class="a" style="left:1266px;top:915px;width:4px;height:11px;background:#555;border-radius:1px"></div>
<div class="a" style="left:1274px;top:917px;width:1px;height:7px;background:#888"></div>
<svg style="left:1325px;top:916px" width="9" height="9" viewBox="0 0 9 9"><path d="M4.5 0 V9 M0 4.5 H9" stroke="#555" stroke-width="1"/></svg>
<div class="t" style="left:1344.0px;top:916.9px;font-size:9.2px;color:#666;font-weight:normal;">80%</div>
<svg style="left:1374px;top:913px" width="16" height="16" viewBox="0 0 16 16"><rect x="4.5" y="4.5" width="7" height="7" rx="1" fill="none" stroke="#555" stroke-width="1.3"/><path d="M6 2.5 L8 0.5 L10 2.5 M6 13.5 L8 15.5 L10 13.5 M2.5 6 L0.5 8 L2.5 10 M13.5 6 L15.5 8 L13.5 10" fill="none" stroke="#555" stroke-width="1.1"/></svg>
<div class="t" style="left:28.5px;top:361.6px;font-size:11px;color:#5a5a5a;font-weight:normal;">1</div>
<div class="a" style="left:49.5px;top:362px;width:83px;height:47px;border-radius:3px;overflow:hidden;background:linear-gradient(180deg,#c3d4ea,#b5c9e4);box-shadow:0 0 0 0.5px #c9d6e3">
<div class="a" style="left:0;top:0;width:83px;height:47px;filter:blur(0.45px)">
<div class="a" style="left:28px;top:3px;width:7px;height:9px;background:#6c9fd6"></div>
<div class="a" style="left:37px;top:5px;width:14px;height:5px;background:#a9c3e2"></div>
<div class="t" style="left:26px;top:15px;font-size:10px;font-weight:bold;color:#6aa8e0">ТИ ЯК?</div>
<div class="a" style="left:13px;top:28px;width:58px;height:2px;background:#5b6f98"></div>
<div class="a" style="left:10px;top:32px;width:63px;height:2px;background:#5b6f98"></div>
<div class="a" style="left:35px;top:37px;width:36px;height:1.5px;background:#8aa0c0"></div>
<div class="a" style="left:35px;top:40px;width:20px;height:1.5px;background:#8aa0c0"></div>
<div class="a" style="left:0px;top:0px;width:6px;height:47px;background:#a8bedc"></div>
<div class="a" style="left:77px;top:0px;width:6px;height:47px;background:#a8bedc"></div>
</div>
<div class="a" style="left:0px;top:44.5px;width:20.75px;height:2.5px;background:#f2a22a"></div><div class="a" style="left:20.75px;top:44.5px;width:20.75px;height:2.5px;background:#3bb091"></div><div class="a" style="left:41.50px;top:44.5px;width:20.75px;height:2.5px;background:#4a9ee0"></div><div class="a" style="left:62.25px;top:44.5px;width:20.75px;height:2.5px;background:#8a5aab"></div>
</div>
<div class="t" style="left:28.5px;top:427.2px;font-size:11px;color:#5a5a5a;font-weight:normal;">2</div>
<div class="a" style="left:49.5px;top:427.7px;width:83px;height:47px;border-radius:3px;overflow:hidden;background:#d9eaf8;box-shadow:0 0 0 0.5px #c9d6e3">
<div class="a" style="left:0;top:0;width:83px;height:47px;filter:blur(0.45px)">
<div class="a" style="left:11px;top:3px;width:62px;height:2px;background:#555"></div>
<div class="a" style="left:19px;top:6px;width:46px;height:2px;background:#555"></div>
<div class="a" style="left:3px;top:9px;width:40px;height:1px;background:#9aa"></div>
<div class="a" style="left:2px;top:17px;width:19px;height:10px;background:#3a5a80"></div>
<div class="a" style="left:2px;top:27px;width:19px;height:3px;background:#555"></div>
<div class="a" style="left:21px;top:23px;width:17px;height:10px;background:#6a5a50"></div>
<div class="a" style="left:21px;top:33px;width:17px;height:3px;background:#444"></div>
<div class="a" style="left:43px;top:15px;width:18px;height:11px;background:#e8e8e8;box-shadow:0 0 0 1px #555"></div>
<div class="a" style="left:43px;top:27px;width:18px;height:3px;background:#555"></div>
<div class="a" style="left:64px;top:15px;width:16px;height:18px;background:#b8c8e0"></div>
<div class="a" style="left:62px;top:34px;width:18px;height:2px;background:#666"></div>
</div>
<div class="a" style="left:0px;top:44.5px;width:20.75px;height:2.5px;background:#f2a22a"></div><div class="a" style="left:20.75px;top:44.5px;width:20.75px;height:2.5px;background:#3bb091"></div><div class="a" style="left:41.50px;top:44.5px;width:20.75px;height:2.5px;background:#4a9ee0"></div><div class="a" style="left:62.25px;top:44.5px;width:20.75px;height:2.5px;background:#8a5aab"></div>
</div>
<div class="t" style="left:28.5px;top:492.9px;font-size:11px;color:#5a5a5a;font-weight:normal;">3</div>
<div class="a" style="left:49.5px;top:493.4px;width:83px;height:47px;border-radius:3px;overflow:hidden;background:#d9eaf8;box-shadow:0 0 0 0.5px #c9d6e3">
<div class="a" style="left:0;top:0;width:83px;height:47px;filter:blur(0.45px)">
<div class="a" style="left:15px;top:4px;width:54px;height:2px;background:#555"></div>
<div class="a" style="left:4px;top:13px;width:36px;height:22px;background:#707a88"></div>
<div class="a" style="left:48px;top:13px;width:30px;height:22px;background:#8a8a88"></div>
<div class="a" style="left:4px;top:37px;width:76px;height:1.5px;background:#444"></div>
</div>
<div class="a" style="left:0px;top:44.5px;width:20.75px;height:2.5px;background:#f2a22a"></div><div class="a" style="left:20.75px;top:44.5px;width:20.75px;height:2.5px;background:#3bb091"></div><div class="a" style="left:41.50px;top:44.5px;width:20.75px;height:2.5px;background:#4a9ee0"></div><div class="a" style="left:62.25px;top:44.5px;width:20.75px;height:2.5px;background:#8a5aab"></div>
</div>
<div class="t" style="left:28.5px;top:558.6px;font-size:11px;color:#5a5a5a;font-weight:normal;">4</div>
<div class="a" style="left:49.5px;top:559.1px;width:83px;height:47px;border-radius:3px;overflow:hidden;background:#d9eaf8;box-shadow:0 0 0 0.5px #c9d6e3">
<div class="a" style="left:0;top:0;width:83px;height:47px;filter:blur(0.45px)">
<div class="a" style="left:5px;top:4px;width:73px;height:2px;background:#444"></div>
<div class="a" style="left:2px;top:11px;width:18px;height:29px;background:#8a6a40"></div>
<div class="a" style="left:23px;top:14px;width:30px;height:21px;background:#6a6058"></div>
<div class="a" style="left:56px;top:18px;width:24px;height:1.2px;background:#888"></div>
<div class="a" style="left:56px;top:21px;width:24px;height:5px;background:#777;opacity:.7"></div>
<div class="a" style="left:56px;top:29px;width:24px;height:2px;background:#888"></div>
</div>
<div class="a" style="left:0px;top:44.5px;width:20.75px;height:2.5px;background:#f2a22a"></div><div class="a" style="left:20.75px;top:44.5px;width:20.75px;height:2.5px;background:#3bb091"></div><div class="a" style="left:41.50px;top:44.5px;width:20.75px;height:2.5px;background:#4a9ee0"></div><div class="a" style="left:62.25px;top:44.5px;width:20.75px;height:2.5px;background:#8a5aab"></div>
</div>
<div class="t" style="left:28.5px;top:624.3px;font-size:11px;color:#5a5a5a;font-weight:normal;">5</div>
<div class="a" style="left:49.5px;top:624.8px;width:83px;height:47px;border-radius:3px;overflow:hidden;background:#d9eaf8;box-shadow:0 0 0 0.5px #c9d6e3">
<div class="a" style="left:0;top:0;width:83px;height:47px;filter:blur(0.45px)">
<div class="a" style="left:3px;top:3px;width:77px;height:2px;background:#555"></div>
<div class="a" style="left:38px;top:6px;width:9px;height:2px;background:#555"></div>
<div class="a" style="left:2px;top:23px;width:22px;height:9px;background:#777;opacity:.75"></div>
<div class="a" style="left:26px;top:17px;width:33px;height:20px;background:#c98a30"></div>
<div class="a" style="left:61px;top:12px;width:21px;height:31px;background:#d8c4b0"></div>
<div class="a" style="left:61px;top:22px;width:5px;height:12px;background:#b03020"></div>
</div>
<div class="a" style="left:0px;top:44.5px;width:20.75px;height:2.5px;background:#f2a22a"></div><div class="a" style="left:20.75px;top:44.5px;width:20.75px;height:2.5px;background:#3bb091"></div><div class="a" style="left:41.50px;top:44.5px;width:20.75px;height:2.5px;background:#4a9ee0"></div><div class="a" style="left:62.25px;top:44.5px;width:20.75px;height:2.5px;background:#8a5aab"></div>
</div>
<div class="t" style="left:28.5px;top:690.0px;font-size:11px;color:#c43e1c;font-weight:normal;">6</div>
<div class="a" style="left:49.5px;top:690.5px;width:83px;height:47px;border-radius:3px;overflow:hidden;background:#d9eaf8;box-shadow:0 0 0 0.5px #c9d6e3">
<div class="a" style="left:0;top:0;width:83px;height:47px;filter:blur(0.45px)">
<div class="a" style="left:5px;top:3px;width:73px;height:2px;background:#555"></div>
<div class="a" style="left:4px;top:12px;width:35px;height:23px;background:#3a4560"></div>
<div class="a" style="left:16px;top:12px;width:8px;height:23px;background:#d8d8e0;opacity:.6"></div>
<div class="a" style="left:47px;top:12px;width:33px;height:23px;background:#5a6a98"></div>
<div class="a" style="left:4px;top:37px;width:75px;height:1.2px;background:#888"></div>
<div class="a" style="left:4px;top:40px;width:60px;height:1.2px;background:#888"></div>
</div>
<div class="a" style="left:0px;top:44.5px;width:20.75px;height:2.5px;background:#f2a22a"></div><div class="a" style="left:20.75px;top:44.5px;width:20.75px;height:2.5px;background:#3bb091"></div><div class="a" style="left:41.50px;top:44.5px;width:20.75px;height:2.5px;background:#4a9ee0"></div><div class="a" style="left:62.25px;top:44.5px;width:20.75px;height:2.5px;background:#8a5aab"></div>
</div>
<div class="a" style="left:47px;top:688.5px;width:88px;height:51px;border:2.5px solid #8e2a2a;border-radius:6px"></div>
<div class="t" style="left:28.5px;top:755.8px;font-size:11px;color:#5a5a5a;font-weight:normal;">7</div>
<div class="a" style="left:49.5px;top:756.2px;width:83px;height:47px;border-radius:3px;overflow:hidden;background:#d9eaf8;box-shadow:0 0 0 0.5px #c9d6e3">
<div class="a" style="left:0;top:0;width:83px;height:47px;filter:blur(0.45px)">
<div class="a" style="left:7px;top:4px;width:67px;height:2px;background:#555"></div>
<div class="a" style="left:7px;top:8px;width:38px;height:2px;background:#555"></div>
<div class="a" style="left:3px;top:13px;width:33px;height:22px;background:#8a8898"></div>
<div class="a" style="left:45px;top:13px;width:32px;height:22px;background:#9098a8"></div>
<div class="a" style="left:51px;top:18px;width:8px;height:8px;background:#2a5a9a;border-radius:50%"></div>
<div class="a" style="left:3px;top:37px;width:76px;height:3px;background:#444;opacity:.6"></div>
</div>
<div class="a" style="left:0px;top:44.5px;width:20.75px;height:2.5px;background:#f2a22a"></div><div class="a" style="left:20.75px;top:44.5px;width:20.75px;height:2.5px;background:#3bb091"></div><div class="a" style="left:41.50px;top:44.5px;width:20.75px;height:2.5px;background:#4a9ee0"></div><div class="a" style="left:62.25px;top:44.5px;width:20.75px;height:2.5px;background:#8a5aab"></div>
</div>
<div class="t" style="left:28.5px;top:821.4px;font-size:11px;color:#5a5a5a;font-weight:normal;">8</div>
<div class="a" style="left:49.5px;top:821.9px;width:83px;height:47px;border-radius:3px;overflow:hidden;background:#d9eaf8;box-shadow:0 0 0 0.5px #c9d6e3">
<div class="a" style="left:0;top:0;width:83px;height:47px;filter:blur(0.45px)">
<div class="a" style="left:10px;top:4px;width:64px;height:2px;background:#555"></div>
<div class="a" style="left:5px;top:10px;width:38px;height:25px;background:#4a4a58"></div>
<div class="a" style="left:20px;top:27px;width:18px;height:8px;background:#9a7040"></div>
<div class="a" style="left:52px;top:10px;width:27px;height:25px;background:#3a5a78"></div>
<div class="a" style="left:60px;top:20px;width:14px;height:10px;background:#d8c8b8"></div>
<div class="a" style="left:7px;top:38px;width:72px;height:1.2px;background:#666"></div>
<div class="a" style="left:7px;top:40px;width:15px;height:1.2px;background:#666"></div>
</div>
<div class="a" style="left:0px;top:44.5px;width:20.75px;height:2.5px;background:#f2a22a"></div><div class="a" style="left:20.75px;top:44.5px;width:20.75px;height:2.5px;background:#3bb091"></div><div class="a" style="left:41.50px;top:44.5px;width:20.75px;height:2.5px;background:#4a9ee0"></div><div class="a" style="left:62.25px;top:44.5px;width:20.75px;height:2.5px;background:#8a5aab"></div>
</div>
<div class="t" style="left:28.5px;top:887.1px;font-size:11px;color:#5a5a5a;font-weight:normal;">9</div>
<div class="a" style="left:49.5px;top:887.6px;width:83px;height:22.399999999999977px;border-radius:3px;overflow:hidden;background:#d9eaf8;box-shadow:0 0 0 0.5px #c9d6e3">
<div class="a" style="left:0;top:0;width:83px;height:22.399999999999977px;filter:blur(0.45px)">
<div class="a" style="left:8px;top:3px;width:68px;height:2px;background:#555"></div>
<div class="a" style="left:34px;top:6px;width:16px;height:2px;background:#555"></div>
<div class="a" style="left:6px;top:13px;width:30px;height:10px;background:#9a9a9a"></div>
<div class="a" style="left:53px;top:11px;width:26px;height:12px;background:#5a4030"></div>
</div>
</div>
<div class="a" style="left:315px;top:353.5px;width:916px;height:514.5px;background:#d8eaf8;box-shadow:0 0 0 1px rgba(120,130,140,.18)"></div>
<div class="t" style="left:371px;top:386.2px;font-size:34px;color:#33373c;transform:scaleX(1.116);transform-origin:0 0">Доступ до інформації та нормалізація розмов</div>
<div class="a" style="left:315px;top:840px;width:229px;height:28px;background:#f5a01e"></div>
<div class="a" style="left:544px;top:840px;width:229px;height:28px;background:#35ad93"></div>
<div class="a" style="left:773px;top:840px;width:229px;height:28px;background:#3f9bdb"></div>
<div class="a" style="left:1002px;top:840px;width:229px;height:28px;background:#8656a4"></div>
<div class="t" style="left:358.7px;top:746px;font-size:11.33px;color:#2f2f2f;font-weight:bold">Фотовиставка «Ти як?» — емоції в кадрі</div>
<div class="t" style="left:358.7px;top:771.8px;font-size:11.31px;color:#4a4a4a">Цей візуальний проєкт є частиною національної інформаційної кампанії програми. Світлини передають стійкість, вразливість і силу реальних людей —</div>
<div class="t" style="left:358.7px;top:783.5px;font-size:11.18px;color:#4a4a4a">студентів, викладачів, співробітників.</div>
<div class="t" style="left:358.7px;top:809.4px;font-size:11.3px;color:#4a4a4a">Кожен знімок супроводжується QR-кодом, що веде до корисних сервісів програми «Ти як?» — порад, чат-боту та контактів фахівців.</div>
<svg style="left:443px;top:781px" width="37" height="3"><path d="M0 2 Q1 0 2 2 T4 2 T6 2 T8 2 T10 2 T12 2 T14 2 T16 2 T18 2 T20 2 T22 2 T24 2 T26 2 T28 2 T30 2 T32 2 T34 2 T36 2" stroke="#d9534f" stroke-width="0.8" fill="none"/></svg>
<div class="a" style="left:352px;top:491px;width:362px;height:240px;overflow:hidden;background:#d8d4cc">
<div class="a" style="left:0;top:0;width:362px;height:240px;filter:blur(1.2px)">
<div class="a" style="left:0px;top:0px;width:362px;height:240px;background:#e6e6e4"></div>
<div class="a" style="left:0px;top:0px;width:14px;height:240px;background:#d4d6d8"></div>
<div class="a" style="left:0px;top:37px;width:9px;height:24px;background:#4a90d0;border-radius:50%"></div>
<div class="a" style="left:14px;top:0px;width:113px;height:100px;background:linear-gradient(90deg,#e2e3e3,#ececeb)"></div>
<div class="a" style="left:21px;top:39px;width:7px;height:13px;background:#f2d53a"></div>
<div class="a" style="left:127px;top:0px;width:72px;height:100px;background:linear-gradient(90deg,#f0f0f0,#dcdcdc)"></div>
<div class="a" style="left:199px;top:0px;width:133px;height:100px;background:#d8c29f"></div>
<div class="a" style="left:202px;top:23px;width:118px;height:86px;background:#b8976c"></div>
<div class="a" style="left:206px;top:27px;width:26px;height:20px;background:#9a9aa0"></div>
<div class="a" style="left:234px;top:27px;width:26px;height:20px;background:#c8c4c0"></div>
<div class="a" style="left:262px;top:27px;width:28px;height:20px;background:#6a6470"></div>
<div class="a" style="left:292px;top:27px;width:26px;height:20px;background:#c89090"></div>
<div class="a" style="left:206px;top:50px;width:26px;height:20px;background:#b4a8b0"></div>
<div class="a" style="left:234px;top:50px;width:26px;height:20px;background:#8a98a8"></div>
<div class="a" style="left:262px;top:50px;width:28px;height:20px;background:#a0a0a8"></div>
<div class="a" style="left:292px;top:50px;width:26px;height:20px;background:#8aa098"></div>
<div class="a" style="left:206px;top:73px;width:26px;height:22px;background:#a8a0a0"></div>
<div class="a" style="left:234px;top:73px;width:26px;height:22px;background:#c0b8b0"></div>
<div class="a" style="left:332px;top:0px;width:30px;height:240px;background:#e0dfdc"></div>
<div class="a" style="left:0px;top:66px;width:16px;height:26px;background:#c8a898;border-radius:45%"></div>
<div class="a" style="left:204px;top:64px;width:18px;height:34px;background:#3a2a28;border-radius:50%"></div>
<div class="a" style="left:206px;top:71px;width:14px;height:24px;background:#e0b8a8;border-radius:45%"></div>
<div class="a" style="left:255px;top:56px;width:30px;height:36px;background:#5a3a2c;border-radius:50%"></div>
<div class="a" style="left:259px;top:61px;width:22px;height:28px;background:#dcb4a4;border-radius:45%"></div>
<div class="a" style="left:253px;top:89px;width:40px;height:60px;background:#1e1f24"></div>
<div class="a" style="left:351px;top:61px;width:11px;height:30px;background:#2a2222;border-radius:40%"></div>
<div class="a" style="left:351px;top:89px;width:11px;height:151px;background:#e0c8c8"></div>
<div class="a" style="left:180px;top:49px;width:28px;height:22px;background:#c05030;border-radius:50% 50% 20% 20%"></div>
<div class="a" style="left:185px;top:59px;width:22px;height:28px;background:#e8c0a8;border-radius:45%"></div>
<div class="a" style="left:178px;top:89px;width:42px;height:151px;background:#1e2024;border-radius:10px 10px 0 0"></div>
<div class="a" style="left:21px;top:53px;width:32px;height:34px;background:#902828;border-radius:50% 50% 35% 35%"></div>
<div class="a" style="left:27px;top:61px;width:22px;height:25px;background:#e0b0a0;border-radius:45%"></div>
<div class="a" style="left:0px;top:88px;width:46px;height:80px;background:#1f6858;border-radius:14px 14px 0 0"></div>
<div class="a" style="left:0px;top:124px;width:32px;height:116px;background:linear-gradient(180deg,#6a3044,#4a2030)"></div>
<div class="a" style="left:81px;top:66px;width:32px;height:22px;background:#802820;border-radius:50% 50% 20% 20%"></div>
<div class="a" style="left:86px;top:72px;width:22px;height:28px;background:#e2b4a0;border-radius:45%"></div>
<div class="a" style="left:79px;top:97px;width:56px;height:110px;background:#222428;border-radius:14px 14px 0 0"></div>
<div class="a" style="left:115px;top:73px;width:30px;height:32px;background:#6a4a38;border-radius:50%"></div>
<div class="a" style="left:120px;top:77px;width:21px;height:27px;background:#dcbcac;border-radius:45%"></div>
<div class="a" style="left:118px;top:102px;width:30px;height:138px;background:#d8d8dc"></div>
<div class="a" style="left:43px;top:68px;width:41px;height:78px;background:#9a6848;border-radius:50% 50% 20% 20%"></div>
<div class="a" style="left:50px;top:73px;width:27px;height:32px;background:#f0c8b8;border-radius:45%"></div>
<div class="a" style="left:26px;top:114px;width:80px;height:82px;background:#a8bce0;border-radius:18px 18px 6px 6px"></div>
<div class="a" style="left:52px;top:113px;width:28px;height:22px;background:#f0f0f0;clip-path:polygon(0 0,100% 0,50% 100%)"></div>
<div class="a" style="left:50px;top:218px;width:53px;height:22px;background:#5a2838"></div>
<div class="a" style="left:45px;top:184px;width:67px;height:42px;background:#2a6ad8"></div>
<div class="a" style="left:78px;top:177px;width:24px;height:9px;background:#1a1a1a;border-radius:3px"></div>
<div class="a" style="left:31px;top:199px;width:14px;height:41px;background:#d8d0c8"></div>
<div class="a" style="left:151px;top:56px;width:36px;height:20px;background:#3a3030;border-radius:50% 50% 10% 10%"></div>
<div class="a" style="left:156px;top:61px;width:29px;height:36px;background:#f0c8b8;border-radius:45%"></div>
<div class="a" style="left:132px;top:95px;width:79px;height:110px;background:#e8e8ea;border-radius:22px 22px 10px 10px"></div>
<div class="a" style="left:144px;top:201px;width:58px;height:39px;background:#1e2436"></div>
<div class="a" style="left:233px;top:73px;width:41px;height:84px;background:#9a7050;border-radius:50% 50% 20% 20%"></div>
<div class="a" style="left:240px;top:78px;width:27px;height:36px;background:#f0c8b8;border-radius:45%"></div>
<div class="a" style="left:215px;top:114px;width:81px;height:126px;background:#1c2232;border-radius:20px 20px 0 0"></div>
<div class="a" style="left:246px;top:115px;width:16px;height:30px;background:#e8e0d8;clip-path:polygon(0 0,100% 0,50% 100%)"></div>
<div class="a" style="left:291px;top:66px;width:55px;height:67px;background:#2a2020;border-radius:50%"></div>
<div class="a" style="left:305px;top:78px;width:29px;height:36px;background:#d8a898;border-radius:45%"></div>
<div class="a" style="left:288px;top:107px;width:70px;height:133px;background:#1c1d22;border-radius:18px 18px 0 0"></div>
<div class="a" style="left:298px;top:114px;width:22px;height:68px;background:#c8c8cc"></div>
<div class="a" style="left:210px;top:231px;width:50px;height:9px;background:#c8b090"></div>
</div></div>
<div class="t" style="left:411px;top:531px;font-size:16px;color:#555;font-weight:bold;transform:rotate(-75deg) scaleY(1.3);transform-origin:20px 8px;filter:blur(0.5px);letter-spacing:1px">ÛNICA</div>
<svg style="left:405px;top:494px" width="46" height="24"><path d="M6 22 L2 6 M14 20 L12 2 M23 19 L23 1 M32 20 L34 2 M40 22 L44 6" stroke="#666" stroke-width="1.5" opacity=".7"/></svg>
<div class="a" style="left:833px;top:491px;width:362px;height:240px;overflow:hidden;background:#d8d4cc">
<div class="a" style="left:0;top:0;width:362px;height:240px;filter:blur(1.2px)">
<div class="a" style="left:0px;top:0px;width:362px;height:75px;background:linear-gradient(180deg,#b9c0d2,#d5d9e4 55%,#e2e3e8)"></div>
<div class="a" style="left:37px;top:9px;width:38px;height:7px;background:#f2f4f8"></div>
<div class="a" style="left:112px;top:21px;width:30px;height:5px;background:#f2f4f8"></div>
<div class="a" style="left:242px;top:5px;width:34px;height:6px;background:#f4f6fa"></div>
<div class="a" style="left:47px;top:39px;width:26px;height:4px;background:#eef0f6"></div>
<div class="a" style="left:127px;top:46px;width:22px;height:4px;background:#eef0f6"></div>
<div class="a" style="left:0px;top:29px;width:362px;height:12px;background:#cfd3de"></div>
<div class="a" style="left:0px;top:64px;width:165px;height:58px;background:linear-gradient(90deg,#c9b48e,#d9c6a0 50%,#d2bd96)"></div>
<div class="a" style="left:14px;top:69px;width:14px;height:50px;background:#d8c49c"></div>
<div class="a" style="left:47px;top:92px;width:16px;height:22px;background:#2e2e36"></div>
<div class="a" style="left:35px;top:94px;width:10px;height:16px;background:#6a88b0"></div>
<div class="a" style="left:164px;top:49px;width:198px;height:85px;background:linear-gradient(90deg,#dfe5ee,#eef2f8 40%,#e4eaf2)"></div>
<div class="a" style="left:177px;top:64px;width:3px;height:65px;background:#b8c0cc"></div>
<div class="a" style="left:207px;top:64px;width:3px;height:65px;background:#b8c0cc"></div>
<div class="a" style="left:237px;top:57px;width:3px;height:70px;background:#b8c0cc"></div>
<div class="a" style="left:307px;top:54px;width:3px;height:70px;background:#b8c0cc"></div>
<div class="a" style="left:347px;top:54px;width:3px;height:70px;background:#b8c0cc"></div>
<div class="a" style="left:0px;top:119px;width:362px;height:121px;background:linear-gradient(90deg,#8c96b8 0%,#a3abc6 35%,#7e8cc0 60%,#4a5ca8 85%,#3d4f9c 100%)"></div>
<div class="a" style="left:0px;top:107px;width:205px;height:36px;background:linear-gradient(90deg,#55555f,#7a7070 30%,#6a6a78 60%,#8a90a8)"></div>
<div class="a" style="left:67px;top:109px;width:14px;height:30px;background:#d8d0c8"></div>
<div class="a" style="left:92px;top:112px;width:10px;height:28px;background:#3a3a48"></div>
<div class="a" style="left:112px;top:109px;width:12px;height:30px;background:#e0e4ec"></div>
<div class="a" style="left:132px;top:115px;width:10px;height:26px;background:#2a2a38"></div>
<div class="a" style="left:152px;top:119px;width:40px;height:22px;background:#2f4ab8;opacity:.85"></div>
<div class="a" style="left:177px;top:109px;width:10px;height:30px;background:#d8c0a0"></div>
<div class="a" style="left:289px;top:121px;width:73px;height:55px;background:#c89a5a"></div>
<div class="a" style="left:291px;top:97px;width:56px;height:27px;background:#eef0f4"></div>
<div class="a" style="left:293px;top:101px;width:12px;height:22px;background:#1e2a6a"></div>
<div class="a" style="left:308px;top:101px;width:12px;height:22px;background:#1e2a6a"></div>
<div class="a" style="left:323px;top:101px;width:10px;height:22px;background:#1e2a6a"></div>
<div class="a" style="left:335px;top:99px;width:12px;height:24px;background:#1e2a6a"></div>
<div class="a" style="left:291px;top:134px;width:14px;height:34px;background:#1f3cb0"></div>
<div class="a" style="left:315px;top:134px;width:14px;height:34px;background:#1f3cb0"></div>
<div class="a" style="left:339px;top:134px;width:14px;height:34px;background:#1f3cb0"></div>
<div class="a" style="left:0px;top:109px;width:180px;height:131px;background:#262834;clip-path:polygon(0 0,40% 5%,70% 30%,95% 70%,100% 100%,0 100%)"></div>
<div class="a" style="left:3px;top:134px;width:40px;height:40px;background:#3a3a48;border-radius:40%"></div>
<div class="a" style="left:40px;top:124px;width:30px;height:34px;background:#1c1c22;border-radius:50%"></div>
<div class="a" style="left:45px;top:149px;width:26px;height:30px;background:#f0ece8"></div>
<div class="a" style="left:23px;top:149px;width:40px;height:91px;background:#2340b8;transform:skewX(-18deg)"></div>
<div class="a" style="left:69px;top:133px;width:34px;height:50px;background:#3a2820;border-radius:45% 45% 10% 10%"></div>
<div class="a" style="left:88px;top:177px;width:56px;height:63px;background:repeating-linear-gradient(170deg,#e8e8ea 0 3px,#4a4a58 3px 6px)"></div>
<div class="a" style="left:122px;top:195px;width:55px;height:45px;background:#15161c"></div>
<div class="a" style="left:157px;top:149px;width:20px;height:30px;background:#2a44b0;opacity:.8"></div>
<div class="a" style="left:213px;top:91px;width:17px;height:35px;background:#6d7a76;border-radius:7px 7px 2px 2px"></div>
<div class="a" style="left:215px;top:126px;width:13px;height:38px;background:#707878"></div>
<div class="a" style="left:216px;top:86px;width:11px;height:11px;background:#e0c0a0;border-radius:50%"></div>
<div class="a" style="left:244px;top:93px;width:19px;height:76px;background:#cbb09a;border-radius:7px 7px 2px 2px"></div>
<div class="a" style="left:248px;top:89px;width:11px;height:11px;background:#3a2a28;border-radius:50%"></div>
<div class="a" style="left:268px;top:76px;width:22px;height:62px;background:#4766a8;border-radius:8px 8px 0 0"></div>
<div class="a" style="left:273px;top:70px;width:12px;height:13px;background:#e0c0a0;border-radius:50%"></div>
<div class="a" style="left:271px;top:137px;width:16px;height:48px;background:#1c1c24"></div>
<div class="a" style="left:329px;top:189px;width:33px;height:51px;background:#d9ae6e"></div>
</div></div>
<svg style="left:884px;top:689px" width="15" height="20" viewBox="0 0 15 20"><g fill="#c8d0e8" stroke="#1a1a30" stroke-width="0.6"><path d="M7 0 L9.5 2.5 L7 5 L4.5 2.5Z"/><path d="M2.5 4.5 L5 7 L2.5 9.5 L0 7Z"/><path d="M11.5 4.5 L14 7 L11.5 9.5 L9 7Z"/></g><path d="M6 8 V18 L8.2 15.8 L10 19.5 L11.5 18.8 L9.8 15.2 L13 15Z" fill="#f4f4f8" stroke="#101020" stroke-width="0.7"/></svg>

<div class="tile" style="left:1409px;top:228px;width:181px;height:215px;background:#b0aea0"></div>
<div class="tile" style="left:1598px;top:228px;width:181px;height:215px;background:#8a8070"></div>
<div class="tile" style="left:1788px;top:228px;width:120px;height:215px;background:#a07040"></div>
<div class="tile" style="left:1409px;top:451px;width:161px;height:214px;background:#7a4a30"></div>
<div class="tile" style="left:1579px;top:451px;width:160px;height:214px;background:#7a5030"></div>
<div class="tile" style="left:1747px;top:451px;width:161px;height:214px;background:#a09a88"></div>
<div class="tile" style="left:1409px;top:674px;width:161px;height:214px;background:#6a1590"></div>
<div class="tile" style="left:1579px;top:674px;width:160px;height:214px;background:#363638"></div>
<div class="tile" style="left:1747px;top:674px;width:161px;height:214px;background:#1f4a58"></div>

<div class="tile" style="left:1409px;top:228px;width:181px;height:215px;background:#c0bfb2;">
<div class="a" style="left:0;top:0;width:100%;height:100%;filter:blur(1.2px)">
<div class="a" style="left:0px;top:0px;width:181px;height:215px;background:linear-gradient(90deg,#a9ab9f 0%,#bdbdb1 35%,#cbcabd 70%,#c9c7ba 100%)"></div>
<div class="a" style="left:81px;top:44px;width:96px;height:150px;background:#c8915e;border-radius:50% 50% 35% 35%"></div>
<div class="a" style="left:77px;top:132px;width:28px;height:75px;background:#bf8d5e;border-radius:40%"></div>
<div class="a" style="left:89px;top:66px;width:86px;height:128px;background:#dca595;border-radius:48% 48% 42% 42%"></div>
<div class="a" style="left:96px;top:72px;width:60px;height:40px;background:#e6b5a6;border-radius:50%"></div>
<div class="a" style="left:80px;top:111px;width:36px;height:26px;border:1.6px solid #6e6e6a;border-radius:5px 5px 9px 9px"></div>
<div class="a" style="left:122px;top:107px;width:44px;height:27px;border:1.6px solid #6e6e6a;border-radius:5px 5px 9px 9px"></div>
<div class="a" style="left:114px;top:158px;width:24px;height:11px;background:#c0404a;border-radius:50%"></div>
<div class="a" style="left:33px;top:174px;width:77px;height:41px;background:#3b3a37;border-radius:18px 18px 0 0"></div>
<div class="a" style="left:166px;top:172px;width:15px;height:43px;background:#3b3a37"></div>
</div>
</div>
<div class="a" style="left:1409px;top:228px;width:181px;height:215px;border:2.5px solid #a8c7fa;border-radius:10px"></div>
<div class="a" style="left:1566.5px;top:235.5px;width:17px;height:17px;border-radius:50%;background:#d3e3fd"></div>
<svg style="left:1569px;top:239px" width="12" height="10"><rect x="0.5" y="3" width="2.2" height="4" rx="1" fill="#0b57d0"/><rect x="4.9" y="0.5" width="2.2" height="9" rx="1" fill="#0b57d0"/><rect x="9.3" y="3" width="2.2" height="4" rx="1" fill="#0b57d0"/></svg>
<div class="t" style="left:1418.4px;top:421.7px;font-size:12.52px;color:#fff;font-weight:normal;-webkit-text-stroke:0.35px #fff;text-shadow:0 0 2px rgba(0,0,0,.35)">Olha Nesterova</div>
<div class="tile" style="left:1598px;top:228px;width:181px;height:215px;background:#b3b6a4;">
<div class="a" style="left:0;top:0;width:100%;height:100%;filter:blur(1.2px)">
<div class="a" style="left:0px;top:0px;width:74px;height:215px;background:linear-gradient(90deg,#9ea392,#c3c8b3 45%,#c6cab6 75%,#b9bda9)"></div>
<div class="a" style="left:73px;top:0px;width:108px;height:90px;background:#6f5b4a"></div>
<div class="a" style="left:102px;top:12px;width:55px;height:50px;background:#7b6757;border-radius:20px 20px 0 0"></div>
<div class="a" style="left:73px;top:0px;width:6px;height:80px;background:#5e4a3a"></div>
<div class="a" style="left:69px;top:40px;width:112px;height:150px;background:#625249;border-radius:48% 40% 10% 30%"></div>
<div class="a" style="left:90px;top:77px;width:91px;height:138px;background:#dbb0a8;border-radius:42% 30% 20% 30%"></div>
<div class="a" style="left:98px;top:90px;width:40px;height:20px;background:#e4c0b8;border-radius:50%"></div>
<div class="a" style="left:108px;top:128px;width:26px;height:4px;background:#8a6058;border-radius:50%"></div>
<div class="a" style="left:140px;top:124px;width:28px;height:4px;background:#8a6058;border-radius:50%"></div>
<div class="a" style="left:137px;top:147px;width:16px;height:30px;background:#c89890;border-radius:40%;opacity:.6"></div>
<div class="a" style="left:128px;top:183px;width:28px;height:7px;background:#c08080;border-radius:50%"></div>
<div class="a" style="left:92px;top:192px;width:89px;height:23px;background:#d4a69c"></div>
<div class="a" style="left:13px;top:180px;width:78px;height:35px;background:linear-gradient(90deg,#8a9ac0,#e8b0b0 40%,#f0e0e0 60%,#9aa8c8)"></div>
</div>
</div>
<div class="a" style="left:1756.0px;top:235.5px;width:17px;height:17px;border-radius:50%;background:rgba(60,60,60,.55)"></div>
<svg style="left:1759.0px;top:238px" width="11" height="12" viewBox="0 0 11 12"><rect x="3.5" y="0.8" width="4" height="6.5" rx="2" fill="#fff"/><path d="M1.5 5.5 Q1.5 9.2 5.5 9.2 Q9.5 9.2 9.5 5.5 M5.5 9.2 V11.5" stroke="#fff" stroke-width="1.1" fill="none"/><path d="M1 1 L10 11" stroke="#fff" stroke-width="1.2"/></svg>
<div class="t" style="left:1607.0px;top:422.0px;font-size:11.94px;color:#fff;font-weight:normal;-webkit-text-stroke:0.35px #fff;text-shadow:0 0 2px rgba(0,0,0,.35)">Наталія Рибка</div>
<div class="tile" style="left:1788px;top:228px;width:120px;height:215px;background:#c8a070;">
<div class="a" style="left:0;top:0;width:100%;height:100%;filter:blur(2.5px)">
<div class="a" style="left:0px;top:0px;width:120px;height:215px;background:linear-gradient(90deg,#c07a30 0%,#d69848 25%,#c8a070 55%,#c4a47a 100%)"></div>
<div class="a" style="left:22px;top:0px;width:98px;height:60px;background:linear-gradient(180deg,#c49460,#d0ac80)"></div>
<div class="a" style="left:0px;top:12px;width:45px;height:150px;background:#d48a38;opacity:.7;border-radius:20px;filter:blur(6px)"></div>
<div class="a" style="left:82px;top:122px;width:30px;height:80px;background:#c8a880;opacity:.7"></div>
<div class="a" style="left:25px;top:72px;width:70px;height:110px;background:#4a3129;border-radius:50% 50% 25% 25%"></div>
<div class="a" style="left:34px;top:83px;width:49px;height:65px;background:#b88f88;border-radius:45%"></div>
<div class="a" style="left:1px;top:148px;width:119px;height:67px;background:#2d58c6;border-radius:22px 22px 0 0"></div>
<div class="a" style="left:48px;top:150px;width:22px;height:40px;background:#9a7068;clip-path:polygon(0 0,100% 0,50% 100%)"></div>
<div class="a" style="left:24px;top:142px;width:18px;height:60px;background:#3e2a24;border-radius:8px"></div>
<div class="a" style="left:78px;top:142px;width:20px;height:62px;background:#3e2a24;border-radius:8px"></div>
<div class="a" style="left:92px;top:167px;width:20px;height:20px;background:#5a8ae0;border-radius:50%;opacity:.6"></div>
</div>
</div>
<div class="a" style="left:1884.5px;top:235.5px;width:17px;height:17px;border-radius:50%;background:rgba(60,60,60,.55)"></div>
<svg style="left:1887.5px;top:238px" width="11" height="12" viewBox="0 0 11 12"><rect x="3.5" y="0.8" width="4" height="6.5" rx="2" fill="#fff"/><path d="M1.5 5.5 Q1.5 9.2 5.5 9.2 Q9.5 9.2 9.5 5.5 M5.5 9.2 V11.5" stroke="#fff" stroke-width="1.1" fill="none"/><path d="M1 1 L10 11" stroke="#fff" stroke-width="1.2"/></svg>
<div class="t" style="left:1797.8px;top:422.0px;font-size:12.03px;color:#fff;font-weight:normal;-webkit-text-stroke:0.35px #fff;text-shadow:0 0 2px rgba(0,0,0,.35)">Оксана Петин...</div>
<div class="tile" style="left:1409px;top:451px;width:161px;height:214px;background:radial-gradient(ellipse 70% 60% at 50% 42%,#8c5c48 0%,#7c4c3a 55%,#6c3e2e 100%);">
</div>
<div class="a" style="left:1462px;top:531.5px;width:54.5px;height:54.5px;border-radius:50%;background:rgba(255,255,255,.16)"></div>
<div class="t" style="left:1480.5px;top:546.0px;font-size:26px;color:#fff;font-weight:normal;">B</div>
<div class="a" style="left:1546.0px;top:457.5px;width:17px;height:17px;border-radius:50%;background:#5c2414"></div>
<svg style="left:1549.0px;top:460px" width="11" height="12" viewBox="0 0 11 12"><rect x="3.5" y="0.8" width="4" height="6.5" rx="2" fill="#e8b8a8"/><path d="M1.5 5.5 Q1.5 9.2 5.5 9.2 Q9.5 9.2 9.5 5.5 M5.5 9.2 V11.5" stroke="#e8b8a8" stroke-width="1.1" fill="none"/><path d="M1 1 L10 11" stroke="#e8b8a8" stroke-width="1.2"/></svg>
<div class="t" style="left:1418.4px;top:645.2px;font-size:12.62px;color:#fff;font-weight:normal;-webkit-text-stroke:0.35px #fff;text-shadow:0 0 2px rgba(0,0,0,.35)">Володимир Юрійови...</div>
<div class="tile" style="left:1579px;top:451px;width:160px;height:214px;background:radial-gradient(ellipse 65% 55% at 55% 38%,#8e6444 0%,#7a5234 50%,#5e3c24 85%,#4e301c 100%);">
</div>
<div class="a" style="left:1631.5px;top:531.5px;width:54.5px;height:54.5px;border-radius:50%;overflow:hidden;background:#e8dcd8">
<div class="a" style="left:0;top:0;width:54.5px;height:54.5px;filter:blur(1px)">
<div class="a" style="left:0px;top:0px;width:54.5px;height:54.5px;background:#ecdcd6"></div>
<div class="a" style="left:8px;top:6px;width:30px;height:46px;background:#c08a58;border-radius:50% 40% 30% 50%"></div>
<div class="a" style="left:20px;top:10px;width:20px;height:28px;background:#e6bea6;border-radius:45%"></div>
<div class="a" style="left:14px;top:40px;width:30px;height:16px;background:#2a58a8;border-radius:40% 40% 0 0"></div>
<div class="a" style="left:38px;top:40px;width:18px;height:16px;background:#3a3a40"></div>
</div></div>
<div class="a" style="left:1715.3px;top:457.5px;width:17px;height:17px;border-radius:50%;background:#5c3414"></div>
<svg style="left:1718.3px;top:460px" width="11" height="12" viewBox="0 0 11 12"><rect x="3.5" y="0.8" width="4" height="6.5" rx="2" fill="#e8c0a8"/><path d="M1.5 5.5 Q1.5 9.2 5.5 9.2 Q9.5 9.2 9.5 5.5 M5.5 9.2 V11.5" stroke="#e8c0a8" stroke-width="1.1" fill="none"/><path d="M1 1 L10 11" stroke="#e8c0a8" stroke-width="1.2"/></svg>
<div class="t" style="left:1587.8px;top:645.5px;font-size:12.05px;color:#fff;font-weight:normal;-webkit-text-stroke:0.35px #fff;text-shadow:0 0 2px rgba(0,0,0,.35)">Ірина Анатоліївна Ян...</div>
<div class="tile" style="left:1747px;top:451px;width:161px;height:214px;background:#d4cbb4;">
<div class="a" style="left:0;top:0;width:100%;height:100%;filter:blur(1.1px)">
<div class="a" style="left:0px;top:0px;width:161px;height:214px;background:linear-gradient(90deg,#a08c70 0%,#ae9a7a 36%,#d8cfb6 40%,#e2dac4 100%)"></div>
<div class="a" style="left:0px;top:0px;width:62px;height:19px;background:#d9ccae"></div>
<div class="a" style="left:2px;top:21px;width:56px;height:128px;background:repeating-linear-gradient(180deg,#8a7a62 0 2px,#b0a28c 2px 7px,#6a6468 7px 10px,#c8c0ac 10px 17px,#a48c6c 17px 22px)"></div>
<div class="a" style="left:33px;top:74px;width:18px;height:75px;background:#c0c4b8;opacity:.7"></div>
<div class="a" style="left:58px;top:19px;width:6px;height:132px;background:#9a8268"></div>
<div class="a" style="left:75px;top:4px;width:40px;height:140px;box-shadow:inset 0 0 0 1.5px #cdbf9e"></div>
<div class="a" style="left:123px;top:9px;width:34px;height:150px;box-shadow:inset 0 0 0 1.5px #cdbf9e"></div>
<div class="a" style="left:53px;top:29px;width:48px;height:26px;background:#5c5048;border-radius:50%"></div>
<div class="a" style="left:39px;top:49px;width:72px;height:50px;background:#6e6c6a;border-radius:50% 50% 15% 15%"></div>
<div class="a" style="left:58px;top:51px;width:40px;height:10px;background:#a8a8a8;border-radius:50%"></div>
<div class="a" style="left:41px;top:64px;width:68px;height:88px;background:#d4a898;border-radius:40% 40% 45% 45%"></div>
<div class="a" style="left:40px;top:88px;width:35px;height:23px;border:2.5px solid #4e3434;border-radius:9px 4px 10px 10px"></div>
<div class="a" style="left:79px;top:88px;width:41px;height:23px;border:2.5px solid #4e3434;border-radius:4px 9px 10px 10px"></div>
<div class="a" style="left:75px;top:124px;width:24px;height:4px;background:#a07070;border-radius:50%"></div>
<div class="a" style="left:57px;top:144px;width:52px;height:50px;background:#d0a498"></div>
<div class="a" style="left:1px;top:146px;width:160px;height:68px;background:#a6b5c9;border-radius:26px 26px 0 0;clip-path:polygon(0 0,30% 0,50% 45%,70% 0,100% 0,100% 100%,0 100%)"></div>
<div class="a" style="left:49px;top:144px;width:30px;height:50px;background:#f2f4f8;clip-path:polygon(0 0,100% 60%,70% 100%,20% 90%)"></div>
<div class="a" style="left:83px;top:144px;width:30px;height:50px;background:#f2f4f8;clip-path:polygon(100% 0,0 60%,30% 100%,80% 90%)"></div>
</div>
</div>
<div class="a" style="left:1884.5px;top:457.5px;width:17px;height:17px;border-radius:50%;background:rgba(60,60,60,.55)"></div>
<svg style="left:1887.5px;top:460px" width="11" height="12" viewBox="0 0 11 12"><rect x="3.5" y="0.8" width="4" height="6.5" rx="2" fill="#fff"/><path d="M1.5 5.5 Q1.5 9.2 5.5 9.2 Q9.5 9.2 9.5 5.5 M5.5 9.2 V11.5" stroke="#fff" stroke-width="1.1" fill="none"/><path d="M1 1 L10 11" stroke="#fff" stroke-width="1.2"/></svg>
<div class="t" style="left:1757.0px;top:645.4px;font-size:12.28px;color:#fff;font-weight:normal;-webkit-text-stroke:0.35px #fff;text-shadow:0 0 2px rgba(0,0,0,.35)">Ольга Гончарова</div>
<div class="tile" style="left:1409px;top:674px;width:161px;height:214px;background:radial-gradient(ellipse 75% 60% at 45% 48%,#8426ae 0%,#6e1696 50%,#5c0d82 100%);">
</div>
<div class="a" style="left:1462px;top:754.5px;width:54.5px;height:54.5px;border-radius:50%;background:radial-gradient(circle,rgba(140,40,190,.55) 60%,rgba(140,40,190,0) 100%)"></div>
<div class="t" style="left:1480.5px;top:769.0px;font-size:26px;color:#fff;font-weight:normal;">E</div>
<div class="a" style="left:1546.0px;top:680.5px;width:17px;height:17px;border-radius:50%;background:#4e0c70"></div>
<svg style="left:1549.0px;top:683px" width="11" height="12" viewBox="0 0 11 12"><rect x="3.5" y="0.8" width="4" height="6.5" rx="2" fill="#e0b0f0"/><path d="M1.5 5.5 Q1.5 9.2 5.5 9.2 Q9.5 9.2 9.5 5.5 M5.5 9.2 V11.5" stroke="#e0b0f0" stroke-width="1.1" fill="none"/><path d="M1 1 L10 11" stroke="#e0b0f0" stroke-width="1.2"/></svg>
<div class="t" style="left:1418.4px;top:867.6px;font-size:12.17px;color:#fff;font-weight:normal;-webkit-text-stroke:0.35px #fff;text-shadow:0 0 2px rgba(0,0,0,.35)">Евгений Коваленко</div>
<div class="tile" style="left:1579px;top:674px;width:160px;height:214px;background:#353537;">
</div>
<div class="a" style="left:1614px;top:744px;width:47px;height:47px;border-radius:50%;overflow:hidden;background:#d89a80">
<div class="a" style="left:0;top:0;width:47px;height:47px;filter:blur(1px)">
<div class="a" style="left:0px;top:0px;width:47px;height:47px;background:radial-gradient(ellipse at 45% 45%,#eab49c,#d89a80 60%,#b87860)"></div>
<div class="a" style="left:4px;top:20px;width:10px;height:5px;background:#4a3028;border-radius:50%"></div>
<div class="a" style="left:22px;top:19px;width:12px;height:5px;background:#4a3028;border-radius:50%"></div>
<div class="a" style="left:10px;top:40px;width:16px;height:5px;background:#c05a50;border-radius:50%"></div>
<div class="a" style="left:40px;top:0px;width:7px;height:47px;background:#3a2a28"></div>
</div></div>
<div class="a" style="left:1657px;top:743px;width:50px;height:50px;border-radius:50%;background:#2c2d2f"></div>
<div class="a" style="left:1658.5px;top:744.5px;width:47px;height:47px;border-radius:50%;overflow:hidden;background:#e4dcc8">
<div class="a" style="left:0;top:0;width:47px;height:47px;filter:blur(0.9px)">
<div class="a" style="left:0px;top:0px;width:47px;height:47px;background:#e2dac6"></div>
<div class="a" style="left:15px;top:7px;width:22px;height:24px;background:#4a3026;border-radius:50% 50% 30% 30%"></div>
<div class="a" style="left:19px;top:12px;width:14px;height:19px;background:#d8a890;border-radius:45%"></div>
<div class="a" style="left:5px;top:30px;width:40px;height:20px;background:#e8dccc;border-radius:40% 40% 0 0"></div>
<div class="a" style="left:2px;top:28px;width:12px;height:10px;background:#4a5048;border-radius:50%"></div>
</div></div>
<div class="t" style="left:1579px;width:160px;text-align:center;top:805.8px;font-size:11.39px;color:#e8e8e8;-webkit-text-stroke:0.55px #e8e8e8">Ещё 15 чел.</div>
<div class="tile" style="left:1747px;top:674px;width:161px;height:214px;background:radial-gradient(ellipse 70% 55% at 52% 48%,#316472 0%,#24525f 55%,#1b4250 100%);">
</div>
<div class="a" style="left:1800.5px;top:754.5px;width:54.5px;height:54.5px;border-radius:50%;background:radial-gradient(circle,rgba(45,70,80,.6) 60%,rgba(45,70,80,0) 100%)"></div>
<div class="t" style="left:1818.0px;top:769.0px;font-size:26px;color:#fff;font-weight:normal;">H</div>
<div class="a" style="left:1884.5px;top:680.5px;width:17px;height:17px;border-radius:50%;background:#16404c"></div>
<svg style="left:1887.5px;top:683px" width="11" height="12" viewBox="0 0 11 12"><rect x="3.5" y="0.8" width="4" height="6.5" rx="2" fill="#8fd0e8"/><path d="M1.5 5.5 Q1.5 9.2 5.5 9.2 Q9.5 9.2 9.5 5.5 M5.5 9.2 V11.5" stroke="#8fd0e8" stroke-width="1.1" fill="none"/><path d="M1 1 L10 11" stroke="#8fd0e8" stroke-width="1.2"/></svg>
<div class="t" style="left:1757.0px;top:867.3px;font-size:12.81px;color:#fff;font-weight:normal;-webkit-text-stroke:0.35px #fff;text-shadow:0 0 2px rgba(0,0,0,.35)">Назар Кротов</div>
<div class="a" id="taskbar"></div>
<div class="t" style="left:18.0px;top:1021.9px;font-size:11.19px;color:#fff;font-weight:normal;-webkit-text-stroke:0.4px #fff">12:23</div>
<div class="a" style="left:56px;top:1021px;width:1px;height:13px;background:#8a8d90"></div>
<div class="t" style="left:66.0px;top:1021.0px;font-size:13.0px;color:#fff;font-weight:normal;letter-spacing:0.25px;-webkit-text-stroke:0.35px #fff">tso-ppyz-wrz</div>
<div class="a" style="left:749px;top:1009.5px;width:65.5px;height:36px;background:#5c1712;border-radius:12px 16px 16px 12px"></div>
<div class="a" style="left:779px;top:1009.5px;width:35.5px;height:36px;background:#f9dedc;border-radius:10px"></div>
<svg style="left:761px;top:1024px" width="10" height="6" viewBox="0 0 10 6"><path d="M1 5 L5 1 L9 5" stroke="#f9dedc" stroke-width="1.6" fill="none"/></svg>
<svg style="left:787px;top:1018px" width="19" height="19" viewBox="0 0 19 19"><rect x="7" y="2" width="5" height="9" rx="2.5" fill="none" stroke="#601410" stroke-width="1.6"/><path d="M4 9 Q4 14 9.5 14 Q15 14 15 9 M9.5 14 V17" stroke="#601410" stroke-width="1.6" fill="none"/><path d="M3 2 L16 17" stroke="#601410" stroke-width="1.7"/></svg>
<div class="a" style="left:821px;top:1009.5px;width:65.5px;height:36px;background:#5c1712;border-radius:12px 16px 16px 12px"></div>
<div class="a" style="left:850.5px;top:1009.5px;width:36.0px;height:36px;background:#f9dedc;border-radius:10px"></div>
<svg style="left:833px;top:1024px" width="10" height="6" viewBox="0 0 10 6"><path d="M1 5 L5 1 L9 5" stroke="#f9dedc" stroke-width="1.6" fill="none"/></svg>
<svg style="left:858px;top:1018px" width="20" height="19" viewBox="0 0 20 19"><path d="M2 5 H13 V14 H2Z" fill="none" stroke="#601410" stroke-width="1.7"/><path d="M13 8 L18 5 V14 L13 11" fill="none" stroke="#601410" stroke-width="1.7"/><path d="M2 2 L17 17" stroke="#601410" stroke-width="1.7"/></svg>
<div class="a" style="left:892.5px;top:1009.5px;width:42px;height:36px;background:#333537;border-radius:18px"></div>
<div class="a" style="left:940.5px;top:1009.5px;width:42px;height:36px;background:#333537;border-radius:18px"></div>
<div class="a" style="left:988.75px;top:1009.5px;width:42px;height:36px;background:#333537;border-radius:18px"></div>
<div class="a" style="left:1036.75px;top:1009.5px;width:42px;height:36px;background:#333537;border-radius:18px"></div>
<div class="a" style="left:1084.25px;top:1009.5px;width:27px;height:36px;background:#333537;border-radius:14px"></div>
<div class="a" style="left:1117.5px;top:1009.5px;width:54.5px;height:36px;background:#dc362e;border-radius:18px"></div>
<svg style="left:904px;top:1019px" width="18" height="17" viewBox="0 0 18 17"><rect x="2" y="2" width="14" height="10" rx="1" fill="none" stroke="#e3e3e3" stroke-width="1.6"/><path d="M0 15 H18" stroke="#e3e3e3" stroke-width="1.4"/><path d="M9 10 V5 M6.5 7.5 L9 5 L11.5 7.5" stroke="#e3e3e3" stroke-width="1.5" fill="none"/></svg>
<svg style="left:952px;top:1019px" width="18" height="18" viewBox="0 0 18 18"><circle cx="9" cy="9" r="7.5" fill="none" stroke="#e3e3e3" stroke-width="1.6"/><circle cx="6.3" cy="7" r="1.2" fill="#e3e3e3"/><circle cx="11.7" cy="7" r="1.2" fill="#e3e3e3"/><path d="M5 10.5 Q9 14.5 13 10.5Z" fill="#e3e3e3"/></svg>
<svg style="left:1001px;top:1020px" width="17" height="15" viewBox="0 0 17 15"><rect x="1" y="1" width="15" height="13" rx="1" fill="none" stroke="#e3e3e3" stroke-width="1.6"/><path d="M7 5.5 H4.5 V9.5 H7 M12.5 5.5 H10 V9.5 H12.5" stroke="#e3e3e3" stroke-width="1.3" fill="none"/></svg>
<svg style="left:1047px;top:1017px" width="20" height="21" viewBox="0 0 20 21"><path d="M6 10 V4 Q6 2.6 7.3 2.6 Q8.6 2.6 8.6 4 V9 M8.6 9 V2.6 Q8.6 1.2 9.9 1.2 Q11.2 1.2 11.2 2.6 V9 M11.2 9 V3.4 Q11.2 2 12.5 2 Q13.8 2 13.8 3.4 V9.5 M13.8 9.5 V5.4 Q13.8 4 15.1 4 Q16.4 4 16.4 5.4 V12.5 Q16.4 19.5 10.5 19.5 Q6.8 19.5 4.8 16.5 L2.2 12.5 Q1.6 11.3 2.7 10.8 Q3.8 10.3 4.6 11.4 L6 13.2" fill="none" stroke="#e3e3e3" stroke-width="1.5" stroke-linejoin="round" stroke-linecap="round"/></svg>
<svg style="left:1095.5px;top:1020px" width="5" height="15" viewBox="0 0 5 15"><circle cx="2.5" cy="2" r="1.6" fill="#e3e3e3"/><circle cx="2.5" cy="7.5" r="1.6" fill="#e3e3e3"/><circle cx="2.5" cy="13" r="1.6" fill="#e3e3e3"/></svg>
<svg style="left:1134px;top:1022px" width="21" height="10" viewBox="0 0 21 10"><path d="M1.5 7.5 Q0.5 6 2 4.5 Q10.5 -1 19 4.5 Q20.5 6 19.5 7.5 L17.5 8.5 Q16.5 9 16 8 L15 5.8 Q10.5 4 6 5.8 L5 8 Q4.5 9 3.5 8.5Z" fill="#fff"/></svg>
<svg style="left:1777px;top:1019px" width="17" height="17" viewBox="0 0 17 17"><circle cx="8.5" cy="8.5" r="7.3" fill="none" stroke="#fff" stroke-width="1.6"/><path d="M8.5 7.5 V12.5" stroke="#fff" stroke-width="1.8"/><circle cx="8.5" cy="5" r="1.1" fill="#fff"/></svg>
<svg style="left:1811px;top:1019px" width="19" height="16" viewBox="0 0 19 16"><circle cx="7" cy="5" r="3.3" fill="none" stroke="#fff" stroke-width="1.6"/><path d="M1 15 V13.5 Q1 10 7 10 Q13 10 13 13.5 V15Z" fill="none" stroke="#fff" stroke-width="1.6"/><path d="M11.5 1.8 Q14.5 2.5 14.5 5 Q14.5 7.5 11.5 8.2 M15 10.3 Q18 11 18 13.5 V15" fill="none" stroke="#fff" stroke-width="1.6"/></svg>
<div class="a" style="left:1821.75px;top:1001.5px;width:20px;height:17.5px;background:#494c50;border-radius:9px"></div>
<div class="t" style="left:1825.8px;top:1006.0px;font-size:9px;color:#e8eaed;font-weight:bold;">24</div>
<svg style="left:1849px;top:1020px" width="16" height="16" viewBox="0 0 16 16"><path d="M1 1 H15 V11.5 H4 L1 14.5Z" fill="none" stroke="#fff" stroke-width="1.6" stroke-linejoin="round"/><path d="M4 4.5 H12 M4 7.5 H12" stroke="#fff" stroke-width="1.4"/></svg>
<svg style="left:1886px;top:1020.5px" width="15" height="15" viewBox="0 0 15 15"><circle cx="2.0" cy="2.0" r="1.7" fill="#fff"/><circle cx="2.0" cy="7.3" r="1.7" fill="#fff"/><circle cx="2.0" cy="12.6" r="1.7" fill="#fff"/><circle cx="7.3" cy="2.0" r="1.7" fill="#fff"/><circle cx="7.3" cy="7.3" r="1.7" fill="#fff"/><circle cx="7.3" cy="12.6" r="1.7" fill="#fff"/><circle cx="12.6" cy="2.0" r="1.7" fill="#fff"/><circle cx="12.6" cy="7.3" r="1.7" fill="#fff"/><circle cx="12.6" cy="12.6" r="1.7" fill="#fff"/></svg>
<div class="a" style="left:0px;top:1057px;width:1920px;height:23px;background:linear-gradient(90deg,#4c4944 0%,#585040 30%,#62553e 60%,#6a5a3d 85%,#6c5b3c 100%)"></div>
<svg style="left:7px;top:1062px" width="13" height="13" viewBox="0 0 13 13"><rect x="0" y="0.5" width="5.8" height="5.5" fill="#fff"/><rect x="6.8" y="0" width="6.2" height="6" fill="#fff"/><rect x="0" y="7" width="5.8" height="5.5" fill="#fff"/><rect x="6.8" y="7" width="6.2" height="6" fill="#fff"/></svg>
<svg style="left:36px;top:1062px" width="12" height="13" viewBox="0 0 12 13"><circle cx="7.5" cy="4.5" r="3.8" fill="none" stroke="#ddd" stroke-width="1.1"/><path d="M4.8 7.5 L1 11.8" stroke="#ddd" stroke-width="1.2"/></svg>
<div class="t" style="left:57.0px;top:1063.0px;font-size:11.55px;color:#c8c4bc;font-weight:normal;">Поиск</div>
<svg style="left:228px;top:1063px" width="13" height="11" viewBox="0 0 13 11"><rect x="2" y="2" width="9" height="7" fill="none" stroke="#fff" stroke-width="1.1"/><path d="M0 0.5 H13 M0 10.5 H13" stroke="#fff" stroke-width="1"/></svg>
<svg style="left:258px;top:1062px" width="10" height="13" viewBox="0 0 10 13"><path d="M0.5 0.5 H9.5 V10 L5 12.5 L0.5 10Z" fill="#1e1e1e" stroke="#ddd" stroke-width="0.8"/><text x="1.5" y="6.5" font-size="4" font-family="Liberation Sans" fill="#fff" font-weight="bold">EPIC</text></svg>
<svg style="left:285px;top:1063px" width="12" height="11" viewBox="0 0 12 11"><circle cx="6" cy="5.5" r="5.8" fill="#5865f2"/><path d="M3 4 Q6 2.5 9 4 V7.5 Q6 9 3 7.5Z" fill="#fff"/><circle cx="4.7" cy="5.8" r="0.9" fill="#5865f2"/><circle cx="7.3" cy="5.8" r="0.9" fill="#5865f2"/></svg>
<svg style="left:313px;top:1062px" width="12" height="12" viewBox="0 0 12 12"><rect x="4" y="1" width="8" height="9" rx="1" fill="#28a8ea"/><rect x="0" y="3" width="7" height="7" rx="1" fill="#0a64c8"/><circle cx="3.5" cy="6.5" r="2" fill="none" stroke="#fff" stroke-width="1"/><path d="M4 8 H12 V11 H4Z" fill="#1490df"/></svg>
<svg style="left:341px;top:1062px" width="11" height="12" viewBox="0 0 11 12"><path d="M8 0 L11 1.5 V10.5 L8 12 L2 6.5 L0.5 8 V4 L2 5.5Z" fill="#1f9cf0"/><path d="M8 0 V12 L3 6Z" fill="#0065a9"/></svg>
<svg style="left:369px;top:1063px" width="10" height="11" viewBox="0 0 10 11"><ellipse cx="5" cy="5.5" rx="4" ry="5" fill="#4a4540"/></svg>
<svg style="left:396px;top:1062px" width="13" height="12" viewBox="0 0 13 12"><path d="M0 2 H5 L6.5 3.5 H13 V12 H0Z" fill="#e8b43a"/><rect x="0" y="5" width="13" height="7" fill="#f8d775"/><rect x="4" y="7" width="5" height="5" fill="#1c7bd4"/></svg>
<svg style="left:424px;top:1062px" width="13" height="12" viewBox="0 0 13 12"><rect x="0.5" y="1" width="12" height="10" fill="#2a88d8" stroke="#8ac8f0" stroke-width="0.8"/><rect x="2" y="3" width="4" height="3" fill="#fff"/><path d="M7 3.5 H11 M7 6 H11 M2 8 H11" stroke="#fff" stroke-width="0.9"/></svg>
<div class="a" style="left:445px;top:1058px;width:118px;height:21px;background:rgba(255,255,255,.26);border-top:1px solid rgba(255,255,255,.35);box-shadow:inset 0 0 0 1px rgba(255,255,255,.12)"></div>
<svg style="left:452px;top:1062px" width="12" height="12" viewBox="0 0 12 12"><circle cx="6" cy="6" r="5.8" fill="#db4437"/><path d="M6 6 L11.8 6 A5.8 5.8 0 0 1 3 11Z" fill="#f4c20d"/><path d="M6 6 L3 11 A5.8 5.8 0 0 1 0.8 3.2Z" fill="#0f9d58"/><circle cx="6" cy="6" r="2.6" fill="#fff"/><circle cx="6" cy="6" r="2" fill="#4285f4"/></svg>
<div class="t" style="left:467.0px;top:1064.1px;font-size:8.8px;color:#fff;font-weight:normal;">Meet – tso-ppyz-wrz ...</div>
<div class="a" style="left:565px;top:1058px;width:119px;height:21px;background:rgba(255,255,255,.16);box-shadow:inset 0 0 0 1px rgba(255,255,255,.08)"></div>
<svg style="left:572px;top:1062px" width="12" height="12" viewBox="0 0 12 12"><circle cx="6" cy="6" r="5.8" fill="#7360f2"/><path d="M3.5 4 Q4 2.8 5 3.2 L5.8 4.5 Q5.5 5.2 5.2 5.6 Q6 7 7 7.5 L7.8 7 L9 7.8 Q9.3 8.8 8.2 9.2 Q5 8.5 3.5 4Z" fill="#fff"/></svg>
<div class="t" style="left:587.0px;top:1064.1px;font-size:8.86px;color:#fff;font-weight:normal;">Rakuten Viber</div>
<div class="a" style="left:1627px;top:1057px;width:60px;height:23px;background:rgba(0,0,0,.07)"></div>
<div class="a" style="left:1687.5px;top:1057px;width:91px;height:23px;background:rgba(255,255,255,.07)"></div>
<svg style="left:1694px;top:1061px" width="16" height="16" viewBox="0 0 16 16"><circle cx="8" cy="9" r="7" fill="#f39c12"/><circle cx="6.5" cy="7.5" r="4" fill="#f7b733" opacity=".8"/><circle cx="12.5" cy="3.5" r="3.3" fill="#d93025"/><text x="11.2" y="5.6" font-size="5" font-family="Liberation Sans" fill="#fff">1</text></svg>
<div class="t" style="left:1716.0px;top:1064.2px;font-size:10.29px;color:#e8e4dc;font-weight:normal;">25°C</div>
<div class="t" style="left:1745.0px;top:1064.2px;font-size:10.23px;color:#e8e4dc;font-weight:normal;">Sunny</div>
<svg style="left:1788px;top:1065px" width="9" height="5" viewBox="0 0 9 5"><path d="M0.5 4.5 L4.5 0.5 L8.5 4.5" stroke="#fff" stroke-width="1" fill="none"/></svg>
<svg style="left:1804px;top:1062px" width="12" height="12" viewBox="0 0 12 12"><circle cx="6" cy="6" r="5.8" fill="#7360f2"/><path d="M3.5 4 Q4 2.8 5 3.2 L5.8 4.5 Q5.5 5.2 5.2 5.6 Q6 7 7 7.5 L7.8 7 L9 7.8 Q9.3 8.8 8.2 9.2 Q5 8.5 3.5 4Z" fill="#fff"/></svg>
<div class="t" style="left:1823.8px;top:1065.1px;font-size:8.49px;color:#fff;font-weight:normal;">РУС</div>
<div class="t" style="left:1850.8px;top:1065.3px;font-size:7.99px;color:#fff;font-weight:normal;">12:23</div>
<svg style="left:1885px;top:1062px" width="12" height="12" viewBox="0 0 12 12"><path d="M0.5 0.5 H11.5 V9 H6 L3 11.5 V9 H0.5Z" fill="none" stroke="#fff" stroke-width="0.9"/></svg>
</body></html>
